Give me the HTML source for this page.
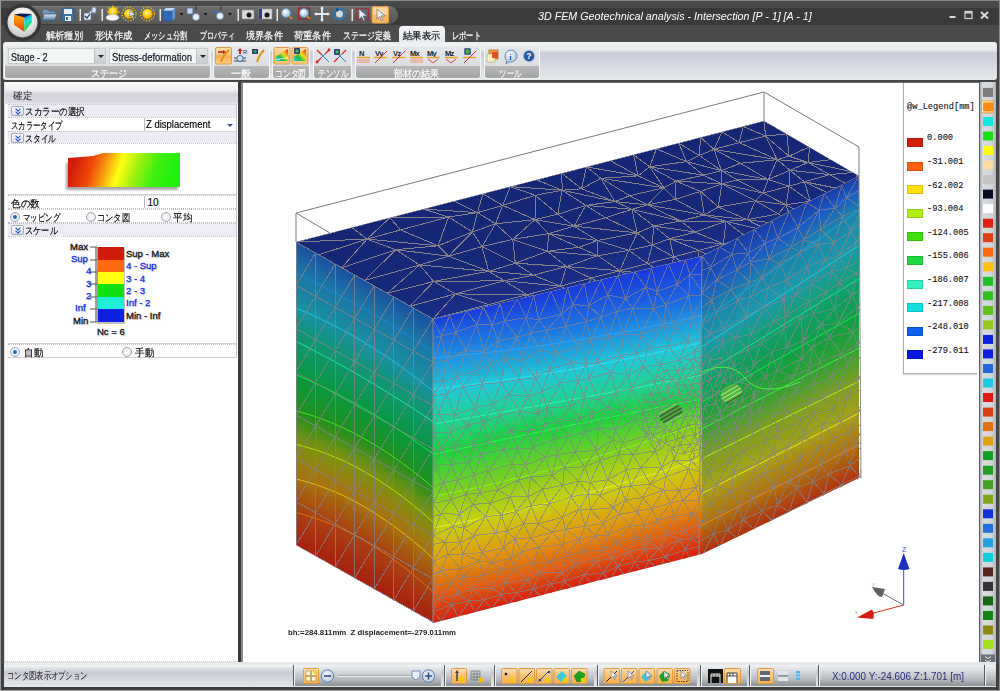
<!DOCTYPE html>
<html><head><meta charset="utf-8">
<style>
*{margin:0;padding:0;box-sizing:border-box}
html,body{width:1000px;height:691px;overflow:hidden;background:#454545;font-family:"Liberation Sans",sans-serif}
.a{position:absolute}
#title{left:0;top:0;width:1000px;height:43px;background:linear-gradient(#8a8a8a 0,#8a8a8a 1px,#4a4a4a 1px,#4a4a4a 8px,#3a3a3a 8px,#3a3a3a 25px,#4b4b4b 25px,#4b4b4b 43px)}
#appbtn{left:6px;top:6px;width:32px;height:32px;border-radius:50%;background:radial-gradient(circle at 50% 35%,#ffffff 0,#e8e8e8 45%,#9a9a9a 100%);box-shadow:0 0 0 2px #2e2e2e}
#qat{left:30px;top:6px;width:368px;height:19px;border-radius:0 10px 10px 0;background:linear-gradient(#6c6c6c,#606060 50%,#585858);border-top:1px solid #7a7a7a;border-bottom:1px solid #3e3e3e}
.ttl{left:538px;top:10px;color:#fff;font-style:italic;font-size:11.5px;white-space:nowrap;transform:scaleX(0.932);transform-origin:0 50%}
.wc{top:6px;color:#fff;font-size:12px;font-weight:bold}
.tab{top:29px;color:#fff;font-size:10px;white-space:nowrap;transform-origin:0 50%;-webkit-text-stroke:0.2px currentColor}
#acttab{left:399px;top:26px;width:46px;height:18px;border-radius:4px 4px 0 0;background:linear-gradient(#f4f6f8,#e2e6ea);}
#ribbon{left:3px;top:42px;width:994px;height:38px;background:linear-gradient(#eef2f2 0,#e6eaec 8px,#c9cbd9 11px,#dde1e4 30px,#e4eaea 38px);border-radius:3px}
.grp{top:45px;height:34px;border-radius:3px;border:1px solid #f4f6f6;background:linear-gradient(#e6e9ec,#d4d8dc)}
.glab{left:0;right:0;bottom:0;height:12px;background:linear-gradient(#b8b8b8,#a4a4a4);color:#f8f8f8;font-size:10px;text-align:center;line-height:12px;border-radius:0 0 3px 3px}
.combo{top:48px;height:16px;background:#f4f6f6;border:1px solid #c8cccc;font-size:11px;color:#1a1a2a;line-height:14px;padding-left:0}
.ct{position:absolute;left:2px;top:0.5px;white-space:nowrap;transform-origin:0 50%;-webkit-text-stroke:0.25px #1a1a2a}
.cbtn{position:absolute;right:0;top:0;width:11px;height:14px;background:linear-gradient(#e4e6e8,#c8cccf);border-left:1px solid #c0c4c4}
.cbtn:after{content:"";position:absolute;left:3px;top:6px;border-left:3px solid transparent;border-right:3px solid transparent;border-top:3px solid #222}
.ico{position:absolute;width:17px;height:17px}
.act{background:linear-gradient(#fbd8a0,#f6a84a);border:1px solid #d6902e;border-radius:2px}
#lp{left:4px;top:82px;width:234px;height:580px;background:#fff;border-bottom:1px dotted #c0c0c8;border-left:1px solid #e0e0e0}
#sep{left:238px;top:82px;width:3px;height:583px;background:#3a3a3a}
#vp{left:241px;top:82px;width:739px;height:583px;background:#fff;border-left:2px solid #8a8a8a;border-top:1px solid #6a6a6a}
#pal{left:980px;top:82px;width:16px;height:580px;background:linear-gradient(90deg,#b8bcc4,#d4d8dc 40%,#c4c8cc)}
#status{left:0;top:661px;width:1000px;height:30px;background:#454545}
.row{position:absolute;left:0;width:230px;font-size:10px;color:#111;white-space:nowrap}
.sec{background:#ebebf3;border-top:1px dotted #c8c8d0;}
.chev{position:absolute;left:5px;top:1px;width:12px;height:10px;border:1px solid #9aa0b0;border-radius:2px;background:linear-gradient(#fff,#dde)}
.panel{background:#fff}
.sec{position:absolute;left:0;width:228px;background:#ececf4;border-top:1px dotted #c4c4cc;font-size:10px;color:#000;-webkit-text-stroke:0.15px #000}
.rw{position:absolute;left:0;width:228px;background:#fff;border-top:1px dotted #c4c4cc;font-size:10px;color:#000;-webkit-text-stroke:0.15px #000}
.st{position:absolute;left:19px;top:0px;white-space:nowrap;transform-origin:0 50%}
.lt{position:absolute;top:1px;white-space:nowrap;transform-origin:0 50%}
.vsep{position:absolute;top:0;bottom:0;width:1px;background:#b8b8b8}
.tri{position:absolute;width:0;height:0;border-left:3px solid transparent;border-right:3px solid transparent;border-top:3px solid #3a5a8a}
.rad{position:absolute;width:10px;height:10px;border-radius:50%;border:1px solid #a0a4b0;background:radial-gradient(#fff,#e4e4ec)}
.rad.on:after{content:"";position:absolute;left:2px;top:2px;width:4px;height:4px;border-radius:50%;background:#1a6ac0}
.chev{position:absolute;left:3px;top:1px;width:13px;height:10px;border:1px solid #a4a8b8;border-radius:2px;background:linear-gradient(#fff,#e0e0ea)}
.chev:before,.chev:after{content:"";position:absolute;left:4px;width:3px;height:3px;border-right:1.5px solid #1a50d0;border-bottom:1.5px solid #1a50d0;transform:rotate(45deg)}
.chev:before{top:-0.5px}.chev:after{top:2.5px}
.sl{font-size:9.5px;white-space:nowrap;text-shadow:1px 1px 1px rgba(0,0,0,0.25);-webkit-text-stroke:0.3px currentColor}

.rl{top:67px;font-size:10px;color:#fafafa;white-space:nowrap;transform-origin:0 50%;text-shadow:0 0 1px #777;-webkit-text-stroke:0.3px #fff}
.sg{top:665px;height:21px;background:linear-gradient(#f0f2f4 0,#d8dce0 6px,#b8bcc0 14px,#8c9094 21px);border-left:1px solid #5a5a5a;box-shadow:inset 1px 0 0 #f4f4f4}
.lg{font-family:"Liberation Mono",monospace;font-size:8.7px;color:#111;white-space:nowrap;-webkit-text-stroke:0.1px #111}
</style></head><body>
<div id="title" class="a"></div>
<div id="qat" class="a"></div>
<svg class="a" style="left:0;top:0" width="400" height="27" viewBox="0 0 400 27">
<defs>
<linearGradient id="qb" x1="0" y1="0" x2="0" y2="1"><stop offset="0" stop-color="#dfe8f0"/><stop offset="1" stop-color="#5a86b0"/></linearGradient>
<radialGradient id="sun" cx="0.45" cy="0.4" r="0.6"><stop offset="0" stop-color="#fff8a0"/><stop offset="0.6" stop-color="#ffc800"/><stop offset="1" stop-color="#e08000"/></radialGradient>
<radialGradient id="lens" cx="0.4" cy="0.35" r="0.7"><stop offset="0" stop-color="#ffffff"/><stop offset="1" stop-color="#8ab8d8"/></radialGradient>
</defs>
<!-- folder -->
<path d="M43 10h5l1 1.5h6v2h-9l-3 6z" fill="#6a9cc8"/><path d="M44 14h13l-2.5 6h-12z" fill="url(#qb)" stroke="#3a6a98" stroke-width="0.8"/>
<!-- save -->
<rect x="62" y="8" width="12" height="13" rx="1" fill="#3a72b0" stroke="#234f80" stroke-width="0.6"/><rect x="64" y="9" width="8" height="5" fill="#e8eef4"/><rect x="65" y="16" width="6" height="5" fill="#f4f4f4"/><rect x="66" y="17" width="2" height="3" fill="#3a72b0"/>
<rect x="79.5" y="9" width="1.5" height="12" fill="#e8e8e8"/>
<!-- check arrow -->
<rect x="84" y="13" width="7" height="7" fill="#e8eef8" stroke="#5a78a0" stroke-width="0.7"/><path d="M85 16l2 2 3-4" stroke="#203050" stroke-width="1.2" fill="none"/><path d="M90 13l4-4" stroke="#b0c8e8" stroke-width="2"/><rect x="92" y="7" width="4" height="6" rx="2" fill="#d8e4f4" stroke="#6a8ab8" stroke-width="0.7"/>
<rect x="101.5" y="9" width="1.5" height="12" fill="#e8e8e8"/>
<!-- cloud sun -->
<circle cx="113" cy="12" r="5" fill="url(#sun)"/><g stroke="#ffd000" stroke-width="1.2"><path d="M113 5.5v1.5M107 12h1.5M118 12h1.5M108.5 7.5l1 1M117.5 7.5l-1 1"/></g><ellipse cx="112.5" cy="17.5" rx="6.5" ry="3.2" fill="#f4f4f4" stroke="#a0a0a0" stroke-width="0.5"/>
<!-- sun cursor -->
<circle cx="129" cy="14" r="5" fill="url(#sun)"/><g stroke="#ffd000" stroke-width="1.2" stroke-dasharray="1.2 1.6"><circle cx="129" cy="14" r="7" fill="none"/></g><path d="M130 10l5 5h-2.5l1.5 3.5-1.3.5-1.5-3.5-1.7 1.7z" fill="#dde6f0" stroke="#4a5a70" stroke-width="0.5"/>
<!-- sun -->
<circle cx="147.5" cy="14" r="5.2" fill="url(#sun)"/><g stroke="#ffd000" stroke-width="1.2" stroke-dasharray="1.2 1.6"><circle cx="147.5" cy="14" r="7" fill="none"/></g>
<rect x="159.5" y="9" width="1.5" height="12" fill="#e8e8e8"/>
<!-- cube -->
<path d="M163 11l3-3h9v10l-3 3h-9z" fill="#2a62b0"/><path d="M163 11l3-3h9l-3 3z" fill="#c8dcf0"/><path d="M172 11l3-3v10l-3 3z" fill="#6a9ad0"/><rect x="163" y="11" width="9" height="10" fill="#2e6ab8" stroke="#1a4a90" stroke-width="0.5"/>
<path d="M179.5 13h4l-2 2.5z" fill="#111"/>
<!-- icon 3 -->
<rect x="187" y="8" width="6" height="6" fill="#c8d8f0" stroke="#4a6aa0" stroke-width="0.8"/><circle cx="196" cy="17" r="3.5" fill="#e8f0f8" stroke="#6a8ab8" stroke-width="0.8"/><path d="M196 6v4" stroke="#222" stroke-width="0.8"/>
<path d="M203.5 13h4l-2 2.5z" fill="#111"/>
<path d="M212 12h6" stroke="#3a70c0" stroke-width="1.5"/><circle cx="220" cy="16" r="3.5" fill="#e8f0f8" stroke="#6a8ab8" stroke-width="0.8"/><path d="M221 6v4" stroke="#222" stroke-width="0.8"/>
<path d="M228 13h4l-2 2.5z" fill="#111"/>
<rect x="237.5" y="9" width="1.5" height="12" fill="#e8e8e8"/>
<!-- camera -->
<rect x="242" y="10" width="12" height="9" rx="1" fill="#d8d8d8" stroke="#909090" stroke-width="0.5"/><circle cx="249" cy="15" r="2.5" fill="#181818"/>
<rect x="259" y="9" width="13" height="10" fill="#d8d8d8" stroke="#909090" stroke-width="0.5"/><rect x="259" y="9" width="3" height="10" fill="#2a3aa0"/><circle cx="267" cy="15" r="2.5" fill="#181818"/>
<rect x="276.5" y="9" width="1.5" height="12" fill="#e8e8e8"/>
<!-- magnifiers -->
<circle cx="286" cy="13" r="4.5" fill="url(#lens)" stroke="#5a8ab8" stroke-width="1"/><path d="M289 16l3 3" stroke="#e09010" stroke-width="1.6"/>
<rect x="298.5" y="8" width="11" height="11" fill="none" stroke="#a02020" stroke-width="1.2"/><circle cx="304" cy="13" r="4.5" fill="url(#lens)" stroke="#5a8ab8" stroke-width="1"/><path d="M307 16l3 3" stroke="#e09010" stroke-width="1.6"/>
<!-- move -->
<path d="M322 7v14M315 14h14" stroke="#e0e8f0" stroke-width="2"/><path d="M322 6l-2 2.5h4zM322 22l-2-2.5h4zM314 14l2.5-2v4zM330 14l-2.5-2v4z" fill="#e0e8f0"/>
<!-- rotate -->
<circle cx="339.5" cy="14" r="5.5" fill="none" stroke="#2a7ac0" stroke-width="2"/><circle cx="339.5" cy="14" r="3.5" fill="#d8d8d8"/><path d="M336 8l3 1.5-2 2.5z" fill="#1a3a80"/>
<rect x="351.5" y="9" width="1.5" height="12" fill="#e8e8e8"/>
<!-- select box -->
<rect x="356.5" y="8.5" width="12" height="11" fill="none" stroke="#a02828" stroke-width="1.2" stroke-dasharray="3 1"/><path d="M359 9l8 7h-4l2 4-1.5.7-2-4-2.5 2.5z" fill="#e8eef8" stroke="#4a5a78" stroke-width="0.6"/>
<!-- active cursor -->
<rect x="372" y="6.5" width="16.5" height="16.5" rx="1.5" fill="#f8b860" stroke="#e8a040" stroke-width="1"/><rect x="373" y="7.5" width="14.5" height="7" fill="#fcd8a0"/><path d="M377 9l8 7h-4l2 4-1.5.7-2-4-2.5 2.5z" fill="#e8eef8" stroke="#4a5a78" stroke-width="0.6"/>
</svg>

<svg class="a" style="left:0;top:0" width="45" height="45" viewBox="0 0 45 45"><defs><radialGradient id="apg" cx="0.5" cy="0.3" r="0.75"><stop offset="0" stop-color="#ffffff"/><stop offset="0.6" stop-color="#e4e4e4"/><stop offset="1" stop-color="#b8b8b8"/></radialGradient><linearGradient id="apo" x1="0" y1="0" x2="0" y2="1"><stop offset="0" stop-color="#ffb000"/><stop offset="1" stop-color="#e84000"/></linearGradient><linearGradient id="apr" x1="0" y1="0" x2="0.3" y2="1"><stop offset="0" stop-color="#2050e0"/><stop offset="0.45" stop-color="#10e0e0"/><stop offset="1" stop-color="#20e010"/></linearGradient></defs>
<circle cx="22.5" cy="22.5" r="18.5" fill="#363636"/><circle cx="22.5" cy="22.5" r="15" fill="url(#apg)"/>
<path d="M14 14.6L24.4 17.6V31.9L14 24.7Z" fill="url(#apo)"/><path d="M24.4 17.6L31.9 14V22.1L24.4 31.9Z" fill="url(#apr)"/><path d="M14 14.6L20 13.6L31.9 14L24.4 17.6Z" fill="#101850"/></svg>
<div class="a ttl">3D FEM Geotechnical analysis - Intersection [P - 1] [A - 1]</div>
<svg class="a" style="left:945px;top:8px" width="50" height="14" viewBox="945 8 50 14"><path d="M949.5 17h6" stroke="#d8d8d8" stroke-width="2"/><rect x="965" y="11.5" width="7" height="7" fill="none" stroke="#d8d8d8" stroke-width="1.2"/><rect x="965" y="11" width="7" height="2.5" fill="#d8d8d8"/><path d="M981 12l7 6.5M988 12l-7 6.5" stroke="#e0e0e0" stroke-width="1.8"/></svg>
<div id="acttab" class="a"></div>
<div class="a tab" style="left:46px;transform:scaleX(0.918)">解析種別</div>
<div class="a tab" style="left:94.6px;transform:scaleX(0.934)">形状作成</div>
<div class="a tab" style="left:144px;transform:scaleX(0.721)">メッシュ分割</div>
<div class="a tab" style="left:199.5px;transform:scaleX(0.69)">プロパティ</div>
<div class="a tab" style="left:245.7px;transform:scaleX(0.918)">境界条件</div>
<div class="a tab" style="left:294px;transform:scaleX(0.92)">荷重条件</div>
<div class="a tab" style="left:343px;transform:scaleX(0.793)">ステージ定義</div>
<div class="a tab" style="left:402.8px;transform:scaleX(0.93);color:#111">結果表示</div>
<div class="a tab" style="left:452px;transform:scaleX(0.72)">レポート</div>
<div id="ribbon" class="a"></div>
<div class="a grp" style="left:4px;width:207px"><div class="a glab"></div></div>
<div class="a combo" style="left:8px;width:98px"><span class="ct" style="transform:scaleX(0.82)">Stage - 2</span><div class="cbtn"></div></div>
<div class="a combo" style="left:109px;width:99px"><span class="ct" style="transform:scaleX(0.86)">Stress-deformation</span><div class="cbtn"></div></div>
<div class="a grp" style="left:213px;width:57px"><div class="a glab"></div></div>
<div class="a grp" style="left:272px;width:38px"><div class="a glab"></div></div>
<div class="a grp" style="left:313px;width:39px"><div class="a glab"></div></div>
<div class="a grp" style="left:355px;width:126px"><div class="a glab"></div></div>
<div class="a grp" style="left:484px;width:56px"><div class="a glab"></div></div>
<div class="a rl" style="left:91px;transform:scaleX(0.9)">ステージ</div>
<div class="a rl" style="left:231px">一般</div>
<div class="a rl" style="left:275px;transform:scaleX(0.78)">コンタ図</div>
<div class="a rl" style="left:317.6px;transform:scaleX(0.75)">テンソル</div>
<div class="a rl" style="left:394.4px;transform:scaleX(0.9)">部材の結果</div>
<div class="a rl" style="left:499px;transform:scaleX(0.75)">ツール</div>
<svg class="a" style="left:0;top:0" width="560" height="80" viewBox="0 0 560 80">
<defs>
<linearGradient id="actg" x1="0" y1="0" x2="0" y2="1"><stop offset="0" stop-color="#fde0b0"/><stop offset="0.45" stop-color="#fbc47a"/><stop offset="0.5" stop-color="#f8aa48"/><stop offset="1" stop-color="#fcd090"/></linearGradient>
<linearGradient id="rbw" x1="0" y1="1" x2="1" y2="0"><stop offset="0" stop-color="#10d0e0"/><stop offset="0.35" stop-color="#20c040"/><stop offset="0.6" stop-color="#f0e020"/><stop offset="1" stop-color="#e02010"/></linearGradient>
<radialGradient id="bub" cx="0.4" cy="0.35" r="0.7"><stop offset="0" stop-color="#ffffff"/><stop offset="1" stop-color="#9ab8d8"/></radialGradient>
</defs>
<!-- 一般 -->
<rect x="215.5" y="47.5" width="16" height="16.5" rx="1.5" fill="url(#actg)" stroke="#e49a40"/>
<path d="M218 52h5" stroke="#c01818" stroke-width="1.5"/><path d="M223 50l3 2-3 2z" fill="#c01818"/><path d="M221 62q2-7 8-12" stroke="#e89010" stroke-width="2" fill="none"/>
<path d="M240 49v5" stroke="#d02020" stroke-width="2"/><path d="M237.5 51l2.5-3 2.5 3z" fill="#d02020"/><path d="M234 58h12M234 61h12" stroke="#404040" stroke-width="1.2"/><circle cx="240" cy="58.5" r="3" fill="#d8e8f8" stroke="#2a6ab0"/><text x="243" y="54" font-size="6" fill="#333" font-family="Liberation Sans">R</text>
<rect x="252" y="49" width="6" height="5" fill="#2a3a7a"/><rect x="253.5" y="50.5" width="3" height="2" fill="#30c030"/><path d="M257 62q2-7 7-12" stroke="#e89010" stroke-width="2" fill="none"/>
<!-- コンタ図 -->
<rect x="274" y="47.5" width="16" height="16.5" rx="1.5" fill="url(#actg)" stroke="#e49a40"/><path d="M276 61v-4q6-5 12-8v12z" fill="url(#rbw)"/><path d="M276 60q5-2 12-2" stroke="#fff" stroke-width="0.8" fill="none"/>
<rect x="292" y="47.5" width="16" height="16.5" rx="1.5" fill="url(#actg)" stroke="#e49a40"/><path d="M294 61v-4q6-5 12-8v12z" fill="url(#rbw)"/><rect x="294" y="48" width="6" height="6" rx="1" fill="#2a3a7a"/><rect x="295.5" y="49.5" width="3" height="3" fill="#40c040"/>
<!-- テンソル -->
<path d="M317 50l12 12M329 50l-12 12" stroke="#3a80d0" stroke-width="1"/><path d="M317 50l5 5M329 50l-4 4M317 62l4-4" stroke="#e02020" stroke-width="1.2"/><circle cx="317" cy="62" r="1.4" fill="#e02020"/><circle cx="329" cy="50" r="1.4" fill="#e02020"/>
<path d="M334 50l12 12M346 50l-12 12" stroke="#3a80d0" stroke-width="1"/><path d="M346 50l-4 4M334 62l4-4" stroke="#e02020" stroke-width="1.2"/><rect x="334" y="49" width="6" height="6" rx="1" fill="#2a3a7a"/><rect x="335.5" y="50.5" width="3" height="3" fill="#40c040"/>
<!-- 部材の結果 -->
<g font-family="Liberation Sans" font-size="7.5" fill="#222" font-weight="bold">
<text x="359" y="56">N</text><text x="375" y="56" letter-spacing="-0.5">Vy</text><text x="393" y="56" letter-spacing="-0.5">Vz</text><text x="410" y="56" letter-spacing="-0.8">Mx</text><text x="427" y="56" letter-spacing="-0.8">My</text><text x="445" y="56" letter-spacing="-0.8">Mz</text>
</g>
<g stroke="#f0a020" stroke-width="1.6"><path d="M357 57.5h13M374 57.5h13M392 57.5h13M410 57.5h13M427 57.5h13M445 57.5h13M463 57.5h13"/></g>
<g stroke="#f09080" stroke-width="1"><path d="M357 60h13M357 62h13M410 60h13M410 62h13"/></g>
<path d="M375 63l12-12M393 63l12-12M464 63l12-12" stroke="#d02040" stroke-width="1"/>
<path d="M428 59l5 4 5-4M446 59l5 4 5-4" stroke="#e04040" stroke-width="1" fill="none"/>
<rect x="464" y="48" width="7" height="7" rx="1" fill="#2a3a7a" stroke="#e0e0f0" stroke-width="0.6"/><rect x="465.5" y="49.5" width="4" height="4" fill="#40c040"/>
<!-- ツール -->
<rect x="489" y="50" width="9" height="9" fill="#f0a030" stroke="#c06020" stroke-width="0.8"/><rect x="487" y="54" width="8" height="8" fill="#f8f0c0" stroke="#a0a080" stroke-width="0.6"/><rect x="492" y="52" width="6" height="6" fill="#e05020"/>
<path d="M505 56a6 6 0 1 1 4 5.6l-3 2.4.5-3.5a6 6 0 0 1-1.5-4.5z" fill="url(#bub)" stroke="#4a7ab0" stroke-width="0.8"/><text x="509.3" y="59.5" font-family="Liberation Serif" font-weight="bold" font-size="8" fill="#1a4a90">i</text>
<circle cx="529" cy="56" r="6" fill="#2a5aa8" stroke="#c8d8ec" stroke-width="1.2"/><text x="526.3" y="59.3" font-family="Liberation Sans" font-weight="bold" font-size="8.5" fill="#fff">?</text>
</svg>

<div id="lp" class="a">
<div class="a" style="left:0;top:0;width:234px;height:22px;background:linear-gradient(#fafafc 0,#f0f0f4 8px,#d4d4dc 12px,#dadae2 20px,#e6e6ee 22px)"></div>
<div class="a jp" style="left:8px;top:7px;font-size:10px;color:#222;transform:scaleX(0.95);transform-origin:0 50%">確定</div>
<div class="a panel" style="left:3px;top:22px;width:229px;height:254px;border-right:1px solid #c4c4cc">
 <div class="a sec" style="top:0;height:13px"><div class="chev"></div><span class="st" style="left:17px;transform:scaleX(0.857)">スカラーの選択</span></div>
 <div class="a rw" style="top:13px;height:14px"><span class="lt" style="left:2.6px;transform:scaleX(0.737)">スカラータイプ</span><div class="a vsep" style="left:136px"></div><span class="lt" style="left:138px;letter-spacing:0;transform:scaleX(0.95)">Z displacement</span><div class="a tri" style="left:219px;top:6px"></div></div>
 <div class="a sec" style="top:27px;height:12px"><div class="chev"></div><span class="st" style="left:17px;transform:scaleX(0.78)">スタイル</span></div>
 <div class="a rw" style="top:39px;height:52px;border-bottom:1px solid #d0d0d0"><svg class="a" style="left:47px;top:9px" width="130" height="40" viewBox="0 0 130 40"><defs><linearGradient id="sg" x1="0" y1="0" x2="1" y2="0.1"><stop offset="0.08" stop-color="#d01c08"/><stop offset="0.25" stop-color="#f04a08"/><stop offset="0.38" stop-color="#f8a010"/><stop offset="0.5" stop-color="#ffff10"/><stop offset="0.65" stop-color="#a0f010"/><stop offset="0.82" stop-color="#40f010"/><stop offset="1" stop-color="#20f010"/></linearGradient><filter id="sh" x="-10%" y="-10%" width="130%" height="140%"><feGaussianBlur stdDeviation="1.2"/></filter></defs><path d="M13 8 L38 5 L48 1 L125 1 L125 35 L13 35 Z" fill="#606060" opacity="0.55" transform="translate(-2,2)" filter="url(#sh)"/><path d="M13 5 L38 3 L48 0 L125 0 L125 34 L13 34 Z" fill="url(#sg)"/></svg></div>
 <div class="a rw" style="top:91px;height:14px;border-bottom:1px dotted #c0c0c8"><span class="lt" style="left:2.6px;transform:scaleX(0.96)">色の数</span><div class="a vsep" style="left:136px"></div><span class="lt" style="left:139.4px;letter-spacing:0">10</span></div>
 <div class="a rw" style="top:105px;height:14px;border-bottom:1px dotted #c0c0c8"><div class="a rad on" style="left:2px;top:2px"></div><span class="lt" style="left:14.6px;transform:scaleX(0.744)">マッピング</span><div class="a rad" style="left:78px;top:2px"></div><span class="lt" style="left:89px;transform:scaleX(0.823)">コンタ図</span><div class="a rad" style="left:153px;top:2px"></div><span class="lt" style="left:165.3px;transform:scaleX(0.95)">平均</span></div>
 <div class="a sec" style="top:119px;height:13px"><div class="chev"></div><span class="st" style="left:17px;transform:scaleX(0.823)">スケール</span></div>
 <div class="a rw" style="top:132px;height:108px;border-bottom:1px solid #d0d0d0"></div>
 <div class="a rw" style="top:240px;height:14px;border-bottom:1px solid #d0d0d0"><div class="a rad on" style="left:2px;top:2px"></div><span class="lt" style="left:15.8px;transform:scaleX(0.96)">自動</span><div class="a rad" style="left:114px;top:2px"></div><span class="lt" style="left:127.4px;transform:scaleX(0.96)">手動</span></div>
</div>
</div>
<div class="a" style="left:0;top:0;width:0;height:0">
<svg class="a" style="left:60px;top:242px" width="110" height="100" viewBox="0 0 110 100">
<g fill="#999" opacity="0.6"><rect x="37" y="6" width="28" height="76"/></g>
<rect x="35" y="5" width="3" height="75" fill="#a0a0a0"/>
<rect x="38" y="5" width="26" height="13" fill="#d01c08"/>
<rect x="38" y="18" width="26" height="12" fill="#ff6a10"/>
<rect x="38" y="30" width="26" height="12" fill="#ffff10"/>
<rect x="38" y="42" width="26" height="13" fill="#10e010"/>
<rect x="38" y="55" width="26" height="12" fill="#20f0d8"/>
<rect x="38" y="67" width="26" height="13" fill="#1020e0"/>
<path d="M30 5H37M30 18H37M30 30H37M30 42H37M30 55H37M30 67H37M30 80H37" stroke="#555" stroke-width="1"/>
</svg>
<div class="a sl" style="left:70px;top:241px;color:#111">Max</div>
<div class="a sl" style="left:71px;top:253px;color:#1430f0">Sup</div>
<div class="a sl" style="left:86px;top:265px;color:#1430f0">4</div>
<div class="a sl" style="left:86px;top:278px;color:#1430f0">3</div>
<div class="a sl" style="left:86px;top:290px;color:#1430f0">2</div>
<div class="a sl" style="left:75px;top:302px;color:#1430f0">Inf</div>
<div class="a sl" style="left:73px;top:315px;color:#111">Min</div>
<div class="a sl" style="left:126px;top:248px;color:#111">Sup - Max</div>
<div class="a sl" style="left:126px;top:260px;color:#1430f0">4 - Sup</div>
<div class="a sl" style="left:126px;top:273px;color:#1430f0">3 - 4</div>
<div class="a sl" style="left:126px;top:285px;color:#1430f0">2 - 3</div>
<div class="a sl" style="left:126px;top:297px;color:#1430f0">Inf - 2</div>
<div class="a sl" style="left:126px;top:310px;color:#111">Min - Inf</div>
<div class="a sl" style="left:97px;top:326px;color:#111">Nc = 6</div>
</div>
<div id="sep" class="a"></div>
<div id="vp" class="a"></div>
<svg class="a" style="left:0;top:0" width="1000" height="691" viewBox="0 0 1000 691"><defs><linearGradient id="gL" gradientUnits="userSpaceOnUse" x1="296" y1="242" x2="166.6" y2="472.3"><stop offset="0" stop-color="#1a4ca8"/><stop offset="0.1" stop-color="#1a68b0"/><stop offset="0.2" stop-color="#1890b0"/><stop offset="0.3" stop-color="#10a090"/><stop offset="0.4" stop-color="#0a9858"/><stop offset="0.5" stop-color="#0a9430"/><stop offset="0.6" stop-color="#209020"/><stop offset="0.7" stop-color="#6a9818"/><stop offset="0.78" stop-color="#a09a10"/><stop offset="0.86" stop-color="#a87010"/><stop offset="0.93" stop-color="#a84010"/><stop offset="1" stop-color="#a02010"/></linearGradient><linearGradient id="gF" gradientUnits="userSpaceOnUse" x1="433" y1="319" x2="500.5" y2="607.2"><stop offset="0" stop-color="#1838e0"/><stop offset="0.1" stop-color="#1a70e0"/><stop offset="0.2" stop-color="#20b0e0"/><stop offset="0.3" stop-color="#20d0d0"/><stop offset="0.4" stop-color="#20d088"/><stop offset="0.5" stop-color="#14c840"/><stop offset="0.6" stop-color="#34d020"/><stop offset="0.7" stop-color="#a0d020"/><stop offset="0.8" stop-color="#e0d010"/><stop offset="0.9" stop-color="#e07010"/><stop offset="1" stop-color="#e02010"/></linearGradient><linearGradient id="gR" gradientUnits="userSpaceOnUse" x1="702" y1="256" x2="823.4" y2="494.2"><stop offset="0" stop-color="#1a58c8"/><stop offset="0.1" stop-color="#2090b0"/><stop offset="0.25" stop-color="#18a090"/><stop offset="0.38" stop-color="#109848"/><stop offset="0.5" stop-color="#189a30"/><stop offset="0.6" stop-color="#50a020"/><stop offset="0.7" stop-color="#a0a020"/><stop offset="0.82" stop-color="#b87010"/><stop offset="0.92" stop-color="#c04010"/><stop offset="1" stop-color="#c02010"/></linearGradient><linearGradient id="gT" gradientUnits="userSpaceOnUse" x1="296" y1="242" x2="323.2" y2="347.4"><stop offset="0" stop-color="#142676"/><stop offset="0.7" stop-color="#15287a"/><stop offset="1" stop-color="#1a2e8a"/></linearGradient><clipPath id="cT"><polygon points="296,242 764,121 859,176 702,256 433,319"/></clipPath><clipPath id="cL"><polygon points="296,242 433,319 433,623 296,545"/></clipPath><clipPath id="cF"><path d="M433,319 L702,256 L699,555 L433,623 Z"/></clipPath><clipPath id="cR"><path d="M702,256 L859,176 L861,478 L699,555 Z"/></clipPath><linearGradient id="fl0" gradientUnits="userSpaceOnUse" x1="305.8" y1="247.5" x2="176.4" y2="477.8"><stop offset="0.000" stop-color="#1a50a0"/><stop offset="0.100" stop-color="#1a78a8"/><stop offset="0.213" stop-color="#1a90a0"/><stop offset="0.326" stop-color="#10986a"/><stop offset="0.434" stop-color="#0a9840"/><stop offset="0.548" stop-color="#209020"/><stop offset="0.658" stop-color="#809010"/><stop offset="0.772" stop-color="#a87010"/><stop offset="0.883" stop-color="#a84010"/><stop offset="1.000" stop-color="#a82010"/></linearGradient><linearGradient id="fl1" gradientUnits="userSpaceOnUse" x1="325.4" y1="258.5" x2="195.9" y2="488.8"><stop offset="0.000" stop-color="#1a50a0"/><stop offset="0.096" stop-color="#1a78a8"/><stop offset="0.207" stop-color="#1a90a0"/><stop offset="0.324" stop-color="#10986a"/><stop offset="0.427" stop-color="#0a9840"/><stop offset="0.534" stop-color="#209020"/><stop offset="0.643" stop-color="#809010"/><stop offset="0.757" stop-color="#a87010"/><stop offset="0.869" stop-color="#a84010"/><stop offset="1.000" stop-color="#a82010"/></linearGradient><linearGradient id="fl2" gradientUnits="userSpaceOnUse" x1="344.9" y1="269.5" x2="215.5" y2="499.8"><stop offset="0.000" stop-color="#1a50a0"/><stop offset="0.094" stop-color="#1a78a8"/><stop offset="0.204" stop-color="#1a90a0"/><stop offset="0.323" stop-color="#10986a"/><stop offset="0.424" stop-color="#0a9840"/><stop offset="0.525" stop-color="#209020"/><stop offset="0.634" stop-color="#809010"/><stop offset="0.749" stop-color="#a87010"/><stop offset="0.861" stop-color="#a84010"/><stop offset="1.000" stop-color="#a82010"/></linearGradient><linearGradient id="fl3" gradientUnits="userSpaceOnUse" x1="364.5" y1="280.5" x2="235.1" y2="510.8"><stop offset="0.000" stop-color="#1a50a0"/><stop offset="0.094" stop-color="#1a78a8"/><stop offset="0.205" stop-color="#1a90a0"/><stop offset="0.324" stop-color="#10986a"/><stop offset="0.423" stop-color="#0a9840"/><stop offset="0.522" stop-color="#209020"/><stop offset="0.631" stop-color="#809010"/><stop offset="0.747" stop-color="#a87010"/><stop offset="0.859" stop-color="#a84010"/><stop offset="1.000" stop-color="#a82010"/></linearGradient><linearGradient id="fl4" gradientUnits="userSpaceOnUse" x1="384.1" y1="291.5" x2="254.7" y2="521.8"><stop offset="0.000" stop-color="#1a50a0"/><stop offset="0.096" stop-color="#1a78a8"/><stop offset="0.210" stop-color="#1a90a0"/><stop offset="0.326" stop-color="#10986a"/><stop offset="0.426" stop-color="#0a9840"/><stop offset="0.525" stop-color="#209020"/><stop offset="0.634" stop-color="#809010"/><stop offset="0.751" stop-color="#a87010"/><stop offset="0.863" stop-color="#a84010"/><stop offset="1.000" stop-color="#a82010"/></linearGradient><linearGradient id="fl5" gradientUnits="userSpaceOnUse" x1="403.6" y1="302.5" x2="274.2" y2="532.8"><stop offset="0.000" stop-color="#1a50a0"/><stop offset="0.100" stop-color="#1a78a8"/><stop offset="0.218" stop-color="#1a90a0"/><stop offset="0.330" stop-color="#10986a"/><stop offset="0.431" stop-color="#0a9840"/><stop offset="0.533" stop-color="#209020"/><stop offset="0.644" stop-color="#809010"/><stop offset="0.762" stop-color="#a87010"/><stop offset="0.873" stop-color="#a84010"/><stop offset="1.000" stop-color="#a82010"/></linearGradient><linearGradient id="fl6" gradientUnits="userSpaceOnUse" x1="423.2" y1="313.5" x2="293.8" y2="543.8"><stop offset="0.000" stop-color="#1a50a0"/><stop offset="0.105" stop-color="#1a78a8"/><stop offset="0.230" stop-color="#1a90a0"/><stop offset="0.336" stop-color="#10986a"/><stop offset="0.440" stop-color="#0a9840"/><stop offset="0.547" stop-color="#209020"/><stop offset="0.660" stop-color="#809010"/><stop offset="0.779" stop-color="#a87010"/><stop offset="0.889" stop-color="#a84010"/><stop offset="1.000" stop-color="#a82010"/></linearGradient><linearGradient id="ff0" gradientUnits="userSpaceOnUse" x1="441.4" y1="317" x2="508.9" y2="605"><stop offset="0.000" stop-color="#1a38dc"/><stop offset="0.044" stop-color="#1a60e0"/><stop offset="0.132" stop-color="#2090e0"/><stop offset="0.235" stop-color="#20c8d8"/><stop offset="0.348" stop-color="#20d090"/><stop offset="0.447" stop-color="#20d040"/><stop offset="0.585" stop-color="#80d020"/><stop offset="0.689" stop-color="#c8d010"/><stop offset="0.799" stop-color="#e0a010"/><stop offset="0.902" stop-color="#e06010"/><stop offset="1.000" stop-color="#d82010"/></linearGradient><linearGradient id="ff1" gradientUnits="userSpaceOnUse" x1="458.2" y1="313.1" x2="525.6" y2="600.8"><stop offset="0.000" stop-color="#1a38dc"/><stop offset="0.051" stop-color="#1a60e0"/><stop offset="0.140" stop-color="#2090e0"/><stop offset="0.241" stop-color="#20c8d8"/><stop offset="0.352" stop-color="#20d090"/><stop offset="0.448" stop-color="#20d040"/><stop offset="0.588" stop-color="#80d020"/><stop offset="0.692" stop-color="#c8d010"/><stop offset="0.802" stop-color="#e0a010"/><stop offset="0.907" stop-color="#e06010"/><stop offset="1.000" stop-color="#d82010"/></linearGradient><linearGradient id="ff2" gradientUnits="userSpaceOnUse" x1="475" y1="309.2" x2="542.3" y2="596.5"><stop offset="0.000" stop-color="#1a38dc"/><stop offset="0.058" stop-color="#1a60e0"/><stop offset="0.148" stop-color="#2090e0"/><stop offset="0.248" stop-color="#20c8d8"/><stop offset="0.355" stop-color="#20d090"/><stop offset="0.450" stop-color="#20d040"/><stop offset="0.590" stop-color="#80d020"/><stop offset="0.695" stop-color="#c8d010"/><stop offset="0.804" stop-color="#e0a010"/><stop offset="0.911" stop-color="#e06010"/><stop offset="1.000" stop-color="#d82010"/></linearGradient><linearGradient id="ff3" gradientUnits="userSpaceOnUse" x1="491.8" y1="305.2" x2="559" y2="592.2"><stop offset="0.000" stop-color="#1a38dc"/><stop offset="0.064" stop-color="#1a60e0"/><stop offset="0.155" stop-color="#2090e0"/><stop offset="0.253" stop-color="#20c8d8"/><stop offset="0.359" stop-color="#20d090"/><stop offset="0.451" stop-color="#20d040"/><stop offset="0.591" stop-color="#80d020"/><stop offset="0.697" stop-color="#c8d010"/><stop offset="0.805" stop-color="#e0a010"/><stop offset="0.914" stop-color="#e06010"/><stop offset="1.000" stop-color="#d82010"/></linearGradient><linearGradient id="ff4" gradientUnits="userSpaceOnUse" x1="508.7" y1="301.3" x2="575.8" y2="587.9"><stop offset="0.000" stop-color="#1a38dc"/><stop offset="0.071" stop-color="#1a60e0"/><stop offset="0.161" stop-color="#2090e0"/><stop offset="0.259" stop-color="#20c8d8"/><stop offset="0.363" stop-color="#20d090"/><stop offset="0.453" stop-color="#20d040"/><stop offset="0.592" stop-color="#80d020"/><stop offset="0.699" stop-color="#c8d010"/><stop offset="0.807" stop-color="#e0a010"/><stop offset="0.916" stop-color="#e06010"/><stop offset="1.000" stop-color="#d82010"/></linearGradient><linearGradient id="ff5" gradientUnits="userSpaceOnUse" x1="525.5" y1="297.3" x2="592.5" y2="583.6"><stop offset="0.000" stop-color="#1a38dc"/><stop offset="0.077" stop-color="#1a60e0"/><stop offset="0.167" stop-color="#2090e0"/><stop offset="0.264" stop-color="#20c8d8"/><stop offset="0.366" stop-color="#20d090"/><stop offset="0.455" stop-color="#20d040"/><stop offset="0.592" stop-color="#80d020"/><stop offset="0.700" stop-color="#c8d010"/><stop offset="0.808" stop-color="#e0a010"/><stop offset="0.918" stop-color="#e06010"/><stop offset="1.000" stop-color="#d82010"/></linearGradient><linearGradient id="ff6" gradientUnits="userSpaceOnUse" x1="542.3" y1="293.4" x2="609.2" y2="579.3"><stop offset="0.000" stop-color="#1a38dc"/><stop offset="0.082" stop-color="#1a60e0"/><stop offset="0.173" stop-color="#2090e0"/><stop offset="0.268" stop-color="#20c8d8"/><stop offset="0.370" stop-color="#20d090"/><stop offset="0.457" stop-color="#20d040"/><stop offset="0.592" stop-color="#80d020"/><stop offset="0.701" stop-color="#c8d010"/><stop offset="0.808" stop-color="#e0a010"/><stop offset="0.919" stop-color="#e06010"/><stop offset="1.000" stop-color="#d82010"/></linearGradient><linearGradient id="ff7" gradientUnits="userSpaceOnUse" x1="559.1" y1="289.5" x2="626" y2="575"><stop offset="0.000" stop-color="#1a38dc"/><stop offset="0.087" stop-color="#1a60e0"/><stop offset="0.178" stop-color="#2090e0"/><stop offset="0.273" stop-color="#20c8d8"/><stop offset="0.373" stop-color="#20d090"/><stop offset="0.459" stop-color="#20d040"/><stop offset="0.591" stop-color="#80d020"/><stop offset="0.701" stop-color="#c8d010"/><stop offset="0.809" stop-color="#e0a010"/><stop offset="0.920" stop-color="#e06010"/><stop offset="1.000" stop-color="#d82010"/></linearGradient><linearGradient id="ff8" gradientUnits="userSpaceOnUse" x1="575.9" y1="285.5" x2="642.7" y2="570.7"><stop offset="0.000" stop-color="#1a38dc"/><stop offset="0.092" stop-color="#1a60e0"/><stop offset="0.182" stop-color="#2090e0"/><stop offset="0.276" stop-color="#20c8d8"/><stop offset="0.377" stop-color="#20d090"/><stop offset="0.461" stop-color="#20d040"/><stop offset="0.589" stop-color="#80d020"/><stop offset="0.700" stop-color="#c8d010"/><stop offset="0.809" stop-color="#e0a010"/><stop offset="0.920" stop-color="#e06010"/><stop offset="1.000" stop-color="#d82010"/></linearGradient><linearGradient id="ff9" gradientUnits="userSpaceOnUse" x1="592.7" y1="281.6" x2="659.4" y2="566.4"><stop offset="0.000" stop-color="#1a38dc"/><stop offset="0.097" stop-color="#1a60e0"/><stop offset="0.186" stop-color="#2090e0"/><stop offset="0.280" stop-color="#20c8d8"/><stop offset="0.380" stop-color="#20d090"/><stop offset="0.463" stop-color="#20d040"/><stop offset="0.587" stop-color="#80d020"/><stop offset="0.699" stop-color="#c8d010"/><stop offset="0.809" stop-color="#e0a010"/><stop offset="0.919" stop-color="#e06010"/><stop offset="1.000" stop-color="#d82010"/></linearGradient><linearGradient id="ff10" gradientUnits="userSpaceOnUse" x1="609.5" y1="277.7" x2="676.2" y2="562.1"><stop offset="0.000" stop-color="#1a38dc"/><stop offset="0.102" stop-color="#1a60e0"/><stop offset="0.190" stop-color="#2090e0"/><stop offset="0.282" stop-color="#20c8d8"/><stop offset="0.383" stop-color="#20d090"/><stop offset="0.466" stop-color="#20d040"/><stop offset="0.584" stop-color="#80d020"/><stop offset="0.698" stop-color="#c8d010"/><stop offset="0.808" stop-color="#e0a010"/><stop offset="0.918" stop-color="#e06010"/><stop offset="1.000" stop-color="#d82010"/></linearGradient><linearGradient id="ff11" gradientUnits="userSpaceOnUse" x1="626.3" y1="273.7" x2="692.9" y2="557.8"><stop offset="0.000" stop-color="#1a38dc"/><stop offset="0.106" stop-color="#1a60e0"/><stop offset="0.193" stop-color="#2090e0"/><stop offset="0.285" stop-color="#20c8d8"/><stop offset="0.386" stop-color="#20d090"/><stop offset="0.468" stop-color="#20d040"/><stop offset="0.581" stop-color="#80d020"/><stop offset="0.696" stop-color="#c8d010"/><stop offset="0.808" stop-color="#e0a010"/><stop offset="0.916" stop-color="#e06010"/><stop offset="1.000" stop-color="#d82010"/></linearGradient><linearGradient id="ff12" gradientUnits="userSpaceOnUse" x1="643.2" y1="269.8" x2="709.6" y2="553.5"><stop offset="0.000" stop-color="#1a38dc"/><stop offset="0.109" stop-color="#1a60e0"/><stop offset="0.195" stop-color="#2090e0"/><stop offset="0.287" stop-color="#20c8d8"/><stop offset="0.390" stop-color="#20d090"/><stop offset="0.471" stop-color="#20d040"/><stop offset="0.578" stop-color="#80d020"/><stop offset="0.693" stop-color="#c8d010"/><stop offset="0.806" stop-color="#e0a010"/><stop offset="0.914" stop-color="#e06010"/><stop offset="1.000" stop-color="#d82010"/></linearGradient><linearGradient id="ff13" gradientUnits="userSpaceOnUse" x1="660" y1="265.8" x2="726.3" y2="549.2"><stop offset="0.000" stop-color="#1a38dc"/><stop offset="0.113" stop-color="#1a60e0"/><stop offset="0.197" stop-color="#2090e0"/><stop offset="0.288" stop-color="#20c8d8"/><stop offset="0.393" stop-color="#20d090"/><stop offset="0.473" stop-color="#20d040"/><stop offset="0.573" stop-color="#80d020"/><stop offset="0.690" stop-color="#c8d010"/><stop offset="0.805" stop-color="#e0a010"/><stop offset="0.911" stop-color="#e06010"/><stop offset="1.000" stop-color="#d82010"/></linearGradient><linearGradient id="ff14" gradientUnits="userSpaceOnUse" x1="676.8" y1="261.9" x2="743.1" y2="544.9"><stop offset="0.000" stop-color="#1a38dc"/><stop offset="0.116" stop-color="#1a60e0"/><stop offset="0.199" stop-color="#2090e0"/><stop offset="0.289" stop-color="#20c8d8"/><stop offset="0.396" stop-color="#20d090"/><stop offset="0.476" stop-color="#20d040"/><stop offset="0.568" stop-color="#80d020"/><stop offset="0.686" stop-color="#c8d010"/><stop offset="0.803" stop-color="#e0a010"/><stop offset="0.907" stop-color="#e06010"/><stop offset="1.000" stop-color="#d82010"/></linearGradient><linearGradient id="ff15" gradientUnits="userSpaceOnUse" x1="693.6" y1="258" x2="759.8" y2="540.7"><stop offset="0.000" stop-color="#1a38dc"/><stop offset="0.119" stop-color="#1a60e0"/><stop offset="0.200" stop-color="#2090e0"/><stop offset="0.290" stop-color="#20c8d8"/><stop offset="0.399" stop-color="#20d090"/><stop offset="0.479" stop-color="#20d040"/><stop offset="0.563" stop-color="#80d020"/><stop offset="0.682" stop-color="#c8d010"/><stop offset="0.801" stop-color="#e0a010"/><stop offset="0.902" stop-color="#e06010"/><stop offset="1.000" stop-color="#d82010"/></linearGradient><linearGradient id="fr0" gradientUnits="userSpaceOnUse" x1="710.7" y1="251.6" x2="831.4" y2="488.3"><stop offset="0.000" stop-color="#1a3aa8"/><stop offset="0.106" stop-color="#1a58c0"/><stop offset="0.211" stop-color="#1a88b0"/><stop offset="0.300" stop-color="#1a98a8"/><stop offset="0.395" stop-color="#10a070"/><stop offset="0.488" stop-color="#10a048"/><stop offset="0.579" stop-color="#30a030"/><stop offset="0.680" stop-color="#80a020"/><stop offset="0.795" stop-color="#a8a018"/><stop offset="0.902" stop-color="#b07010"/><stop offset="1.000" stop-color="#b03010"/></linearGradient><linearGradient id="fr1" gradientUnits="userSpaceOnUse" x1="728.2" y1="242.7" x2="849" y2="479.8"><stop offset="0.000" stop-color="#1a3aa8"/><stop offset="0.099" stop-color="#1a58c0"/><stop offset="0.200" stop-color="#1a88b0"/><stop offset="0.292" stop-color="#1a98a8"/><stop offset="0.388" stop-color="#10a070"/><stop offset="0.484" stop-color="#10a048"/><stop offset="0.578" stop-color="#30a030"/><stop offset="0.680" stop-color="#80a020"/><stop offset="0.794" stop-color="#a8a018"/><stop offset="0.901" stop-color="#b07010"/><stop offset="1.000" stop-color="#b03010"/></linearGradient><linearGradient id="fr2" gradientUnits="userSpaceOnUse" x1="745.6" y1="233.8" x2="866.6" y2="471.2"><stop offset="0.000" stop-color="#1a3aa8"/><stop offset="0.091" stop-color="#1a58c0"/><stop offset="0.189" stop-color="#1a88b0"/><stop offset="0.283" stop-color="#1a98a8"/><stop offset="0.382" stop-color="#10a070"/><stop offset="0.480" stop-color="#10a048"/><stop offset="0.577" stop-color="#30a030"/><stop offset="0.680" stop-color="#80a020"/><stop offset="0.793" stop-color="#a8a018"/><stop offset="0.899" stop-color="#b07010"/><stop offset="1.000" stop-color="#b03010"/></linearGradient><linearGradient id="fr3" gradientUnits="userSpaceOnUse" x1="763.1" y1="224.9" x2="884.2" y2="462.7"><stop offset="0.000" stop-color="#1a3aa8"/><stop offset="0.084" stop-color="#1a58c0"/><stop offset="0.177" stop-color="#1a88b0"/><stop offset="0.275" stop-color="#1a98a8"/><stop offset="0.375" stop-color="#10a070"/><stop offset="0.476" stop-color="#10a048"/><stop offset="0.576" stop-color="#30a030"/><stop offset="0.680" stop-color="#80a020"/><stop offset="0.792" stop-color="#a8a018"/><stop offset="0.898" stop-color="#b07010"/><stop offset="1.000" stop-color="#b03010"/></linearGradient><linearGradient id="fr4" gradientUnits="userSpaceOnUse" x1="780.5" y1="216" x2="901.9" y2="454.2"><stop offset="0.000" stop-color="#1a3aa8"/><stop offset="0.076" stop-color="#1a58c0"/><stop offset="0.166" stop-color="#1a88b0"/><stop offset="0.267" stop-color="#1a98a8"/><stop offset="0.369" stop-color="#10a070"/><stop offset="0.473" stop-color="#10a048"/><stop offset="0.575" stop-color="#30a030"/><stop offset="0.680" stop-color="#80a020"/><stop offset="0.790" stop-color="#a8a018"/><stop offset="0.897" stop-color="#b07010"/><stop offset="1.000" stop-color="#b03010"/></linearGradient><linearGradient id="fr5" gradientUnits="userSpaceOnUse" x1="797.9" y1="207.1" x2="919.5" y2="445.6"><stop offset="0.000" stop-color="#1a3aa8"/><stop offset="0.069" stop-color="#1a58c0"/><stop offset="0.155" stop-color="#1a88b0"/><stop offset="0.259" stop-color="#1a98a8"/><stop offset="0.363" stop-color="#10a070"/><stop offset="0.469" stop-color="#10a048"/><stop offset="0.574" stop-color="#30a030"/><stop offset="0.680" stop-color="#80a020"/><stop offset="0.789" stop-color="#a8a018"/><stop offset="0.895" stop-color="#b07010"/><stop offset="1.000" stop-color="#b03010"/></linearGradient><linearGradient id="fr6" gradientUnits="userSpaceOnUse" x1="815.4" y1="198.2" x2="937.1" y2="437.1"><stop offset="0.000" stop-color="#1a3aa8"/><stop offset="0.062" stop-color="#1a58c0"/><stop offset="0.143" stop-color="#1a88b0"/><stop offset="0.251" stop-color="#1a98a8"/><stop offset="0.356" stop-color="#10a070"/><stop offset="0.465" stop-color="#10a048"/><stop offset="0.573" stop-color="#30a030"/><stop offset="0.680" stop-color="#80a020"/><stop offset="0.788" stop-color="#a8a018"/><stop offset="0.894" stop-color="#b07010"/><stop offset="1.000" stop-color="#b03010"/></linearGradient><linearGradient id="fr7" gradientUnits="userSpaceOnUse" x1="832.8" y1="189.3" x2="954.7" y2="428.6"><stop offset="0.000" stop-color="#1a3aa8"/><stop offset="0.054" stop-color="#1a58c0"/><stop offset="0.132" stop-color="#1a88b0"/><stop offset="0.242" stop-color="#1a98a8"/><stop offset="0.350" stop-color="#10a070"/><stop offset="0.461" stop-color="#10a048"/><stop offset="0.572" stop-color="#30a030"/><stop offset="0.680" stop-color="#80a020"/><stop offset="0.787" stop-color="#a8a018"/><stop offset="0.892" stop-color="#b07010"/><stop offset="1.000" stop-color="#b03010"/></linearGradient><linearGradient id="fr8" gradientUnits="userSpaceOnUse" x1="850.3" y1="180.4" x2="972.4" y2="420"><stop offset="0.000" stop-color="#1a3aa8"/><stop offset="0.047" stop-color="#1a58c0"/><stop offset="0.121" stop-color="#1a88b0"/><stop offset="0.234" stop-color="#1a98a8"/><stop offset="0.343" stop-color="#10a070"/><stop offset="0.457" stop-color="#10a048"/><stop offset="0.571" stop-color="#30a030"/><stop offset="0.680" stop-color="#80a020"/><stop offset="0.786" stop-color="#a8a018"/><stop offset="0.891" stop-color="#b07010"/><stop offset="1.000" stop-color="#b03010"/></linearGradient><clipPath id="cTun"><ellipse cx="700" cy="405" rx="62" ry="48" transform="rotate(-20 700 405)"/></clipPath><mask id="mTun" maskUnits="userSpaceOnUse" x="0" y="0" width="1000" height="691"><rect x="0" y="0" width="1000" height="691" fill="#fff"/><ellipse cx="700" cy="405" rx="62" ry="48" transform="rotate(-20 700 405)" fill="#000"/></mask></defs><polygon points="296,242 764,121 859,176 702,256 433,319" fill="url(#gT)"/><polygon points="296,242 316.1,253.3 316.1,556.3 296,545" fill="url(#fl0)"/><polygon points="315,252.7 335.7,264.3 335.7,567.3 315,555.7" fill="url(#fl1)"/><polygon points="334.6,263.7 355.3,275.3 355.3,578.3 334.6,566.7" fill="url(#fl2)"/><polygon points="354.2,274.7 374.8,286.3 374.8,589.3 354.2,577.7" fill="url(#fl3)"/><polygon points="373.7,285.7 394.4,297.3 394.4,600.3 373.7,588.7" fill="url(#fl4)"/><polygon points="393.3,296.7 414,308.3 414,611.3 393.3,599.7" fill="url(#fl5)"/><polygon points="412.9,307.7 433,319 433,622 412.9,610.7" fill="url(#fl6)"/><polyline points="296,273.2 307.4,278.7 318.8,284.3 330.2,290.2 341.7,296.2 353.1,302.5 364.5,309 375.9,315.7 387.3,322.5 398.8,329.6 410.2,336.9 421.6,344.3 433,352" stroke="#2080e0" stroke-width="1" fill="none"/><polyline points="296,308.1 307.4,312.8 318.8,318 330.2,323.6 341.7,329.5 353.1,335.9 364.5,342.6 375.9,349.7 387.3,357.2 398.8,365.1 410.2,373.4 421.6,382.1 433,391.1" stroke="#20c0e0" stroke-width="1" fill="none"/><polyline points="296,341.4 307.4,347.2 318.8,353.1 330.2,359.2 341.7,365.5 353.1,371.9 364.5,378.5 375.9,385.3 387.3,392.2 398.8,399.4 410.2,406.6 421.6,414.1 433,421.7" stroke="#20e0b0" stroke-width="1" fill="none"/><polyline points="296,374.7 307.4,379.6 318.8,384.9 330.2,390.4 341.7,396.2 353.1,402.4 364.5,408.8 375.9,415.6 387.3,422.6 398.8,430 410.2,437.6 421.6,445.6 433,453.8" stroke="#20e050" stroke-width="1" fill="none"/><polyline points="296,410.8 307.4,414 318.8,417.8 330.2,422.2 341.7,427.2 353.1,432.7 364.5,438.8 375.9,445.5 387.3,452.7 398.8,460.6 410.2,469 421.6,477.9 433,487.5" stroke="#50e020" stroke-width="1" fill="none"/><polyline points="296,444.4 307.4,447.4 318.8,450.9 330.2,455.2 341.7,460 353.1,465.5 364.5,471.7 375.9,478.5 387.3,485.9 398.8,494 410.2,502.7 421.6,512 433,522" stroke="#b0e010" stroke-width="1" fill="none"/><polyline points="296,478.9 307.4,482 318.8,485.6 330.2,489.9 341.7,494.9 353.1,500.6 364.5,506.8 375.9,513.8 387.3,521.4 398.8,529.7 410.2,538.6 421.6,548.1 433,558.4" stroke="#e0c010" stroke-width="1" fill="none"/><polyline points="296,512.6 307.4,515.7 318.8,519.4 330.2,523.7 341.7,528.7 353.1,534.4 364.5,540.6 375.9,547.5 387.3,555.1 398.8,563.3 410.2,572.1 421.6,581.6 433,591.7" stroke="#e07010" stroke-width="1" fill="none"/><polygon points="433,319 450.9,314.8 450.9,618.4 433,623" fill="url(#ff0)"/><polygon points="448.7,315.3 467.7,310.9 467.7,614.1 448.7,619" fill="url(#ff1)"/><polygon points="465.5,311.4 484.5,306.9 484.5,609.8 465.5,614.7" fill="url(#ff2)"/><polygon points="482.4,307.4 501.3,303 501.3,605.5 482.4,610.3" fill="url(#ff3)"/><polygon points="499.2,303.5 518.1,299.1 518.1,601.2 499.2,606" fill="url(#ff4)"/><polygon points="516,299.6 535,295.1 535,596.8 516,601.7" fill="url(#ff5)"/><polygon points="532.8,295.6 551.8,291.2 551.8,592.5 532.8,597.4" fill="url(#ff6)"/><polygon points="549.6,291.7 568.6,287.2 568.6,588.2 549.6,593.1" fill="url(#ff7)"/><polygon points="566.4,287.8 585.4,283.3 585.4,583.9 566.4,588.8" fill="url(#ff8)"/><polygon points="583.2,283.8 602.2,279.4 602.2,579.6 583.2,584.5" fill="url(#ff9)"/><polygon points="600,279.9 619,275.4 619,575.3 600,580.2" fill="url(#ff10)"/><polygon points="616.9,275.9 635.8,271.5 635.8,571 616.9,575.8" fill="url(#ff11)"/><polygon points="633.7,272 652.6,267.6 652.6,566.7 633.7,571.5" fill="url(#ff12)"/><polygon points="650.5,268.1 669.5,263.6 669.5,562.3 650.5,567.2" fill="url(#ff13)"/><polygon points="667.3,264.1 686.3,259.7 686.3,558 667.3,562.9" fill="url(#ff14)"/><polygon points="684.1,260.2 702,256 702,554 684.1,558.6" fill="url(#ff15)"/><polyline points="433,331.2 455.4,328.8 477.8,326.3 500.2,323.7 522.7,320.8 545.1,317.8 567.5,314.6 589.9,311.2 612.3,307.7 634.8,303.9 657.2,300.1 679.6,296 702,291.8" stroke="#2060f0" stroke-width="1" fill="none"/><polyline points="433,357.9 455.4,355.9 477.8,353.6 500.2,351 522.7,348.2 545.1,345.1 567.5,341.7 589.9,338 612.3,334.1 634.8,329.9 657.2,325.4 679.6,320.6 702,315.6" stroke="#30a0f0" stroke-width="1" fill="none"/><polyline points="433,389.2 455.4,386.6 477.8,383.8 500.2,380.8 522.7,377.5 545.1,373.9 567.5,370.1 589.9,366.1 612.3,361.8 634.8,357.3 657.2,352.6 679.6,347.6 702,342.4" stroke="#30e0f0" stroke-width="1" fill="none"/><polyline points="433,424.2 455.4,420.3 477.8,416.4 500.2,412.5 522.7,408.5 545.1,404.4 567.5,400.4 589.9,396.3 612.3,392.1 634.8,388 657.2,383.7 679.6,379.5 702,375.2" stroke="#30f0b0" stroke-width="1" fill="none"/><polyline points="433,454.6 455.4,449.7 477.8,444.9 500.2,440.1 522.7,435.3 545.1,430.6 567.5,426 589.9,421.4 612.3,416.8 634.8,412.3 657.2,407.8 679.6,403.4 702,399" stroke="#30f050" stroke-width="1" fill="none"/><polyline points="433,496.5 455.4,492.1 477.8,487.3 500.2,482.2 522.7,476.8 545.1,471.1 567.5,465.1 589.9,458.8 612.3,452.2 634.8,445.3 657.2,438.1 679.6,430.6 702,422.9" stroke="#90f020" stroke-width="1" fill="none"/><polyline points="433,527.8 455.4,523.7 477.8,519.2 500.2,514.4 522.7,509.3 545.1,504 567.5,498.4 589.9,492.4 612.3,486.2 634.8,479.8 657.2,473 679.6,466 702,458.6" stroke="#e0f020" stroke-width="1" fill="none"/><polyline points="433,561.6 455.4,556.9 477.8,552.1 500.2,547.1 522.7,541.9 545.1,536.5 567.5,531 589.9,525.3 612.3,519.5 634.8,513.4 657.2,507.3 679.6,500.9 702,494.4" stroke="#f0a020" stroke-width="1" fill="none"/><polyline points="433,592.6 455.4,588.8 477.8,584.6 500.2,580 522.7,575.2 545.1,570 567.5,564.4 589.9,558.5 612.3,552.3 634.8,545.8 657.2,538.9 679.6,531.7 702,524.2" stroke="#f06020" stroke-width="1" fill="none"/><polygon points="702,256 720.1,246.8 720.1,545.3 702,554" fill="url(#fr0)"/><polygon points="718.8,247.4 737.5,237.9 737.5,536.8 718.8,545.9" fill="url(#fr1)"/><polygon points="736.3,238.5 755,229 755,528.4 736.3,537.4" fill="url(#fr2)"/><polygon points="753.7,229.7 772.4,220.1 772.4,519.9 753.7,529" fill="url(#fr3)"/><polygon points="771.1,220.8 789.9,211.2 789.9,511.5 771.1,520.5" fill="url(#fr4)"/><polygon points="788.6,211.9 807.3,202.3 807.3,503 788.6,512.1" fill="url(#fr5)"/><polygon points="806,203 824.7,193.5 824.7,494.6 806,503.6" fill="url(#fr6)"/><polygon points="823.5,194.1 842.2,184.6 842.2,486.1 823.5,495.2" fill="url(#fr7)"/><polygon points="840.9,185.2 859,176 859,478 840.9,486.7" fill="url(#fr8)"/><polyline points="702,288.8 715.1,280.5 728.2,272.2 741.2,263.9 754.3,255.6 767.4,247.3 780.5,238.9 793.6,230.6 806.7,222.3 819.8,214 832.8,205.7 845.9,197.3 859,189" stroke="#2060e0" stroke-width="1" fill="none"/><polyline points="702,320.7 715.1,311.5 728.2,302.4 741.2,293.3 754.3,284.1 767.4,275 780.5,265.8 793.6,256.6 806.7,247.5 819.8,238.3 832.8,229.1 845.9,219.9 859,210.7" stroke="#20a0e0" stroke-width="1" fill="none"/><polyline points="702,346.6 715.1,338.2 728.2,329.8 741.2,321.4 754.3,312.9 767.4,304.5 780.5,296.1 793.6,287.7 806.7,279.2 819.8,270.8 832.8,262.4 845.9,253.9 859,245.5" stroke="#20d0d0" stroke-width="1" fill="none"/><polyline points="702,374.6 715.1,366.6 728.2,358.6 741.2,350.7 754.3,342.7 767.4,334.7 780.5,326.7 793.6,318.7 806.7,310.7 819.8,302.7 832.8,294.7 845.9,286.7 859,278.7" stroke="#20e090" stroke-width="1" fill="none"/><polyline points="702,402 715.1,394.6 728.2,387.3 741.2,379.9 754.3,372.5 767.4,365.1 780.5,357.8 793.6,350.4 806.7,343 819.8,335.6 832.8,328.2 845.9,320.8 859,313.4" stroke="#20e050" stroke-width="1" fill="none"/><polyline points="702,428.8 715.1,422.1 728.2,415.4 741.2,408.7 754.3,401.9 767.4,395.2 780.5,388.5 793.6,381.8 806.7,375 819.8,368.3 832.8,361.6 845.9,354.9 859,348.1" stroke="#40f040" stroke-width="1" fill="none"/><polyline points="702,458.6 715.1,452.2 728.2,445.8 741.2,439.3 754.3,432.9 767.4,426.4 780.5,420 793.6,413.6 806.7,407.1 819.8,400.7 832.8,394.2 845.9,387.8 859,381.4" stroke="#b0f030" stroke-width="1" fill="none"/><polyline points="702,493.2 715.1,486.5 728.2,479.9 741.2,473.2 754.3,466.5 767.4,459.8 780.5,453.1 793.6,446.5 806.7,439.8 819.8,433.1 832.8,426.4 845.9,419.8 859,413.1" stroke="#f0e020" stroke-width="1" fill="none"/><polyline points="702,525.1 715.1,518.4 728.2,511.7 741.2,505 754.3,498.3 767.4,491.6 780.5,485 793.6,478.3 806.7,471.6 819.8,464.9 832.8,458.2 845.9,451.5 859,444.8" stroke="#f08020" stroke-width="1" fill="none"/><path d="M245.6,236.3L273.2,229.2 329.1,214.7 367.2,204.9 400.6,196.2 431.3,188.3 460.1,180.8 487.5,173.8 513.7,167 539.1,160.4 563.6,154.1 587.5,147.9 610.8,141.9 633.6,136 655.9,130.2 677.7,124.6 699.2,119 720.4,113.5 741.2,108.2 761.7,102.9M268.5,249.1L296,242 351.9,227.5 390,217.7 423.4,209.1 454.1,201.1 482.9,193.7 510.3,186.6 536.6,179.8 561.9,173.3 586.5,166.9 610.3,160.7 633.6,154.7 656.4,148.8 678.7,143.1 700.6,137.4 722.1,131.8 743.2,126.4 764,121 784.5,115.7M291.3,262L318.8,254.8 367,239.1 400.5,229.9 448.6,217 477.5,212.6 502.8,205.4 535.2,195.3 562.1,190.2 581.5,188.8 600.9,178.3 638.1,175.9 649.7,166.8 686.5,161.6 699.2,155.5 714,149.4 739.1,142.6 765.6,136.1 786.8,133.8 807.3,128.5M314.1,274.8L341.7,267.7 395.8,249.7 438.1,245.8 472.4,231.9 495.5,223.8 535,219.6 557.8,214.2 585.8,205.4 615,201.6 629.8,195.7 663.9,187.8 676.1,181.1 703.6,175.2 721.5,170.7 740.4,163.3 777.1,159.7 789,156.2 809.7,146.7 830.2,141.4M337,287.6L364.5,280.5 419.6,265 448.6,256.2 481.9,246.6 512.7,239.4 548.7,233.6 574,226.2 605.6,217.8 631.9,209.3 647.6,204.9 675.3,199.4 700.5,191.4 721.8,183.9 737.4,180 768.2,179.6 790,170.3 808,162.5 832.5,159.5 853,154.2M359.8,300.5L387.3,293.3 433.8,281.4 488.7,271.3 515.3,263.2 547.3,251.3 578.9,247.3 597.4,240.6 637.3,232.9 653.7,226 680.7,221 704.4,215 718.3,207 755.4,200.8 763,193.1 789.1,186.2 804.4,181.8 829.6,174.6 855.3,172.3 875.8,167M382.6,313.3L410.2,306.2 455.3,293.9 504.4,280.8 533.4,275.1 566.5,266.6 597.9,255.7 628.8,250.3 652.3,245.1 669.7,238.7 695,232.1 725.9,221.3 747.1,219.7 778.2,213.8 786,204.8 810.3,201.3 831.9,194.9 863.1,193.5 878.2,185.2 898.7,179.9M405.5,326.1L433,319 488.9,304.5 527,294.7 560.4,286.1 591.1,278.1 619.9,270.7 647.3,263.6 673.6,256.8 698.9,250.3 723.5,243.9 747.3,237.7 770.6,231.7 793.4,225.8 815.7,220.1 837.6,214.4 859.1,208.8 880.2,203.4 901,198 921.5,192.7M428.3,339L455.8,331.8 511.7,317.4 549.8,307.5 583.3,298.9 613.9,291 642.7,283.5 670.1,276.4 696.4,269.6 721.7,263.1 746.3,256.7 770.2,250.6 793.5,244.5 816.2,238.7 838.5,232.9 860.4,227.2 881.9,221.7 903,216.2 923.8,210.8 944.3,205.5M245.6,236.3L268.5,249.1 291.3,262 314.1,274.8 337,287.6 359.8,300.5 382.6,313.3 405.5,326.1 428.3,339M273.2,229.2L296,242 318.8,254.8 341.7,267.7 364.5,280.5 387.3,293.3 410.2,306.2 433,319 455.8,331.8M329.1,214.7L351.9,227.5 367,239.1 395.8,249.7 419.6,265 433.8,281.4 455.3,293.9 488.9,304.5 511.7,317.4M367.2,204.9L390,217.7 400.5,229.9 438.1,245.8 448.6,256.2 488.7,271.3 504.4,280.8 527,294.7 549.8,307.5M400.6,196.2L423.4,209.1 448.6,217 472.4,231.9 481.9,246.6 515.3,263.2 533.4,275.1 560.4,286.1 583.3,298.9M431.3,188.3L454.1,201.1 477.5,212.6 495.5,223.8 512.7,239.4 547.3,251.3 566.5,266.6 591.1,278.1 613.9,291M460.1,180.8L482.9,193.7 502.8,205.4 535,219.6 548.7,233.6 578.9,247.3 597.9,255.7 619.9,270.7 642.7,283.5M487.5,173.8L510.3,186.6 535.2,195.3 557.8,214.2 574,226.2 597.4,240.6 628.8,250.3 647.3,263.6 670.1,276.4M513.7,167L536.6,179.8 562.1,190.2 585.8,205.4 605.6,217.8 637.3,232.9 652.3,245.1 673.6,256.8 696.4,269.6M539.1,160.4L561.9,173.3 581.5,188.8 615,201.6 631.9,209.3 653.7,226 669.7,238.7 698.9,250.3 721.7,263.1M563.6,154.1L586.5,166.9 600.9,178.3 629.8,195.7 647.6,204.9 680.7,221 695,232.1 723.5,243.9 746.3,256.7M587.5,147.9L610.3,160.7 638.1,175.9 663.9,187.8 675.3,199.4 704.4,215 725.9,221.3 747.3,237.7 770.2,250.6M610.8,141.9L633.6,154.7 649.7,166.8 676.1,181.1 700.5,191.4 718.3,207 747.1,219.7 770.6,231.7 793.5,244.5M633.6,136L656.4,148.8 686.5,161.6 703.6,175.2 721.8,183.9 755.4,200.8 778.2,213.8 793.4,225.8 816.2,238.7M655.9,130.2L678.7,143.1 699.2,155.5 721.5,170.7 737.4,180 763,193.1 786,204.8 815.7,220.1 838.5,232.9M677.7,124.6L700.6,137.4 714,149.4 740.4,163.3 768.2,179.6 789.1,186.2 810.3,201.3 837.6,214.4 860.4,227.2M699.2,119L722.1,131.8 739.1,142.6 777.1,159.7 790,170.3 804.4,181.8 831.9,194.9 859.1,208.8 881.9,221.7M720.4,113.5L743.2,126.4 765.6,136.1 789,156.2 808,162.5 829.6,174.6 863.1,193.5 880.2,203.4 903,216.2M741.2,108.2L764,121 786.8,133.8 809.7,146.7 832.5,159.5 855.3,172.3 878.2,185.2 901,198 923.8,210.8M761.7,102.9L784.5,115.7 807.3,128.5 830.2,141.4 853,154.2 875.8,167 898.7,179.9 921.5,192.7 944.3,205.5M273.2,229.2L268.5,249.1M296,242L291.3,262M291.3,262L341.7,267.7M314.1,274.8L364.5,280.5M337,287.6L387.3,293.3M387.3,293.3L382.6,313.3M410.2,306.2L405.5,326.1M433,319L428.3,339M273.2,229.2L351.9,227.5M296,242L367,239.1M367,239.1L341.7,267.7M395.8,249.7L364.5,280.5M419.6,265L387.3,293.3M433.8,281.4L410.2,306.2M455.3,293.9L433,319M488.9,304.5L455.8,331.8M329.1,214.7L390,217.7M390,217.7L367,239.1M367,239.1L438.1,245.8M395.8,249.7L448.6,256.2M419.6,265L488.7,271.3M433.8,281.4L504.4,280.8M455.3,293.9L527,294.7M527,294.7L511.7,317.4M400.6,196.2L390,217.7M390,217.7L448.6,217M448.6,217L438.1,245.8M472.4,231.9L448.6,256.2M481.9,246.6L488.7,271.3M488.7,271.3L533.4,275.1M504.4,280.8L560.4,286.1M527,294.7L583.3,298.9M400.6,196.2L454.1,201.1M423.4,209.1L477.5,212.6M477.5,212.6L472.4,231.9M495.5,223.8L481.9,246.6M512.7,239.4L515.3,263.2M515.3,263.2L566.5,266.6M566.5,266.6L560.4,286.1M591.1,278.1L583.3,298.9M431.3,188.3L482.9,193.7M482.9,193.7L477.5,212.6M502.8,205.4L495.5,223.8M535,219.6L512.7,239.4M548.7,233.6L547.3,251.3M547.3,251.3L597.9,255.7M566.5,266.6L619.9,270.7M619.9,270.7L613.9,291M460.1,180.8L510.3,186.6M510.3,186.6L502.8,205.4M535.2,195.3L535,219.6M535,219.6L574,226.2M548.7,233.6L597.4,240.6M597.4,240.6L597.9,255.7M628.8,250.3L619.9,270.7M619.9,270.7L670.1,276.4M487.5,173.8L536.6,179.8M510.3,186.6L562.1,190.2M562.1,190.2L557.8,214.2M585.8,205.4L574,226.2M574,226.2L637.3,232.9M637.3,232.9L628.8,250.3M652.3,245.1L647.3,263.6M673.6,256.8L670.1,276.4M513.7,167L561.9,173.3M561.9,173.3L562.1,190.2M562.1,190.2L615,201.6M585.8,205.4L631.9,209.3M631.9,209.3L637.3,232.9M653.7,226L652.3,245.1M669.7,238.7L673.6,256.8M698.9,250.3L696.4,269.6M539.1,160.4L586.5,166.9M586.5,166.9L581.5,188.8M600.9,178.3L615,201.6M615,201.6L647.6,204.9M631.9,209.3L680.7,221M653.7,226L695,232.1M669.7,238.7L723.5,243.9M723.5,243.9L721.7,263.1M563.6,154.1L610.3,160.7M586.5,166.9L638.1,175.9M600.9,178.3L663.9,187.8M663.9,187.8L647.6,204.9M647.6,204.9L704.4,215M680.7,221L725.9,221.3M725.9,221.3L723.5,243.9M747.3,237.7L746.3,256.7M587.5,147.9L633.6,154.7M633.6,154.7L638.1,175.9M649.7,166.8L663.9,187.8M676.1,181.1L675.3,199.4M700.5,191.4L704.4,215M704.4,215L747.1,219.7M725.9,221.3L770.6,231.7M747.3,237.7L793.5,244.5M610.8,141.9L656.4,148.8M656.4,148.8L649.7,166.8M649.7,166.8L703.6,175.2M676.1,181.1L721.8,183.9M721.8,183.9L718.3,207M755.4,200.8L747.1,219.7M747.1,219.7L793.4,225.8M793.4,225.8L793.5,244.5M655.9,130.2L656.4,148.8M678.7,143.1L686.5,161.6M686.5,161.6L721.5,170.7M721.5,170.7L721.8,183.9M721.8,183.9L763,193.1M755.4,200.8L786,204.8M786,204.8L793.4,225.8M815.7,220.1L816.2,238.7M677.7,124.6L678.7,143.1M700.6,137.4L699.2,155.5M714,149.4L721.5,170.7M721.5,170.7L768.2,179.6M768.2,179.6L763,193.1M789.1,186.2L786,204.8M810.3,201.3L815.7,220.1M837.6,214.4L838.5,232.9M677.7,124.6L722.1,131.8M722.1,131.8L714,149.4M714,149.4L777.1,159.7M777.1,159.7L768.2,179.6M790,170.3L789.1,186.2M804.4,181.8L810.3,201.3M831.9,194.9L837.6,214.4M837.6,214.4L881.9,221.7M720.4,113.5L722.1,131.8M743.2,126.4L739.1,142.6M765.6,136.1L777.1,159.7M777.1,159.7L808,162.5M790,170.3L829.6,174.6M804.4,181.8L863.1,193.5M831.9,194.9L880.2,203.4M859.1,208.8L903,216.2M720.4,113.5L764,121M764,121L765.6,136.1M786.8,133.8L789,156.2M809.7,146.7L808,162.5M808,162.5L855.3,172.3M855.3,172.3L863.1,193.5M878.2,185.2L880.2,203.4M880.2,203.4L923.8,210.8M761.7,102.9L764,121M784.5,115.7L786.8,133.8M786.8,133.8L830.2,141.4M830.2,141.4L832.5,159.5M832.5,159.5L875.8,167M855.3,172.3L898.7,179.9M898.7,179.9L901,198M921.5,192.7L923.8,210.8" stroke="#828288" stroke-width="1" fill="none" shape-rendering="crispEdges" clip-path="url(#cT)"/><path d="M276.4,187.7L296,198.7 315.6,209.7 335.1,220.7 354.7,231.7 374.3,242.7 393.9,253.7 413.4,264.7 433,275.7 452.6,286.7M276.4,231L296,242 315.6,253 335.1,264 354.7,275 374.3,286 393.9,297 413.4,308 433,319 452.6,330M276.4,274.3L296,285.3 315.6,296.3 335.1,307.3 354.7,318.3 374.3,329.3 393.9,340.3 413.4,351.3 433,362.3 452.6,373.3M276.4,317.6L296,328.6 315.6,339.6 335.1,350.6 354.7,361.6 374.3,372.6 393.9,383.6 413.4,394.6 433,405.6 452.6,416.6M276.4,360.9L296,371.9 315.6,382.9 335.1,393.9 354.7,404.9 374.3,415.9 393.9,426.9 413.4,437.9 433,448.9 452.6,459.9M276.4,404.1L296,415.1 315.6,426.1 335.1,437.1 354.7,448.1 374.3,459.1 393.9,470.1 413.4,481.1 433,492.1 452.6,503.1M276.4,447.4L296,458.4 315.6,469.4 335.1,480.4 354.7,491.4 374.3,502.4 393.9,513.4 413.4,524.4 433,535.4 452.6,546.4M276.4,490.7L296,501.7 315.6,512.7 335.1,523.7 354.7,534.7 374.3,545.7 393.9,556.7 413.4,567.7 433,578.7 452.6,589.7M276.4,534L296,545 315.6,556 335.1,567 354.7,578 374.3,589 393.9,600 413.4,611 433,622 452.6,633M276.4,577.3L296,588.3 315.6,599.3 335.1,610.3 354.7,621.3 374.3,632.3 393.9,643.3 413.4,654.3 433,665.3 452.6,676.3M276.4,187.7L276.4,231 276.4,274.3 276.4,317.6 276.4,360.9 276.4,404.1 276.4,447.4 276.4,490.7 276.4,534 276.4,577.3M296,198.7L296,242 296,285.3 296,328.6 296,371.9 296,415.1 296,458.4 296,501.7 296,545 296,588.3M315.6,209.7L315.6,253 315.6,296.3 315.6,339.6 315.6,382.9 315.6,426.1 315.6,469.4 315.6,512.7 315.6,556 315.6,599.3M335.1,220.7L335.1,264 335.1,307.3 335.1,350.6 335.1,393.9 335.1,437.1 335.1,480.4 335.1,523.7 335.1,567 335.1,610.3M354.7,231.7L354.7,275 354.7,318.3 354.7,361.6 354.7,404.9 354.7,448.1 354.7,491.4 354.7,534.7 354.7,578 354.7,621.3M374.3,242.7L374.3,286 374.3,329.3 374.3,372.6 374.3,415.9 374.3,459.1 374.3,502.4 374.3,545.7 374.3,589 374.3,632.3M393.9,253.7L393.9,297 393.9,340.3 393.9,383.6 393.9,426.9 393.9,470.1 393.9,513.4 393.9,556.7 393.9,600 393.9,643.3M413.4,264.7L413.4,308 413.4,351.3 413.4,394.6 413.4,437.9 413.4,481.1 413.4,524.4 413.4,567.7 413.4,611 413.4,654.3M433,275.7L433,319 433,362.3 433,405.6 433,448.9 433,492.1 433,535.4 433,578.7 433,622 433,665.3M452.6,286.7L452.6,330 452.6,373.3 452.6,416.6 452.6,459.9 452.6,503.1 452.6,546.4 452.6,589.7 452.6,633 452.6,676.3M296,198.7L276.4,231M296,242L276.4,274.3M296,285.3L276.4,317.6M296,328.6L276.4,360.9M296,371.9L276.4,404.1M296,415.1L276.4,447.4M296,458.4L276.4,490.7M296,501.7L276.4,534M296,545L276.4,577.3M315.6,209.7L296,242M315.6,253L296,285.3M315.6,296.3L296,328.6M315.6,339.6L296,371.9M315.6,382.9L296,415.1M315.6,426.1L296,458.4M315.6,469.4L296,501.7M315.6,512.7L296,545M315.6,556L296,588.3M335.1,220.7L315.6,253M335.1,264L315.6,296.3M335.1,307.3L315.6,339.6M335.1,350.6L315.6,382.9M335.1,393.9L315.6,426.1M335.1,437.1L315.6,469.4M335.1,480.4L315.6,512.7M335.1,523.7L315.6,556M335.1,567L315.6,599.3M354.7,231.7L335.1,264M354.7,275L335.1,307.3M354.7,318.3L335.1,350.6M354.7,361.6L335.1,393.9M354.7,404.9L335.1,437.1M354.7,448.1L335.1,480.4M354.7,491.4L335.1,523.7M354.7,534.7L335.1,567M354.7,578L335.1,610.3M374.3,242.7L354.7,275M374.3,286L354.7,318.3M374.3,329.3L354.7,361.6M374.3,372.6L354.7,404.9M374.3,415.9L354.7,448.1M374.3,459.1L354.7,491.4M374.3,502.4L354.7,534.7M374.3,545.7L354.7,578M374.3,589L354.7,621.3M393.9,253.7L374.3,286M393.9,297L374.3,329.3M393.9,340.3L374.3,372.6M393.9,383.6L374.3,415.9M393.9,426.9L374.3,459.1M393.9,470.1L374.3,502.4M393.9,513.4L374.3,545.7M393.9,556.7L374.3,589M393.9,600L374.3,632.3M413.4,264.7L393.9,297M413.4,308L393.9,340.3M413.4,351.3L393.9,383.6M413.4,394.6L393.9,426.9M413.4,437.9L393.9,470.1M413.4,481.1L393.9,513.4M413.4,524.4L393.9,556.7M413.4,567.7L393.9,600M413.4,611L393.9,643.3M433,275.7L413.4,308M433,319L413.4,351.3M433,362.3L413.4,394.6M433,405.6L413.4,437.9M433,448.9L413.4,481.1M433,492.1L413.4,524.4M433,535.4L413.4,567.7M433,578.7L413.4,611M433,622L413.4,654.3M452.6,286.7L433,319M452.6,330L433,362.3M452.6,373.3L433,405.6M452.6,416.6L433,448.9M452.6,459.9L433,492.1M452.6,503.1L433,535.4M452.6,546.4L433,578.7M452.6,589.7L433,622M452.6,633L433,665.3" stroke="#828288" stroke-width="1" stroke-opacity="0.8" fill="none" shape-rendering="crispEdges" clip-path="url(#cL)"/><path d="M424.6,305L441.4,301 458.2,297.1 475,293.2 491.8,289.2 508.7,285.3 525.5,281.3 542.3,277.4 559.1,273.5 575.9,269.5 592.7,265.6 609.5,261.7 626.3,257.7 643.2,253.8 660,249.8 676.8,245.9 693.6,242 710.4,238 727.2,234.1M416.2,322.9L433,319 449.8,315.1 466.6,311.1 483.4,307.2 500.2,303.2 517.1,299.3 533.9,295.4 550.7,291.4 567.5,287.5 584.3,283.6 601.1,279.6 617.9,275.7 634.8,271.8 651.6,267.8 668.4,263.9 685.2,259.9 702,256 718.8,252.1M421.7,341.5L441.5,335.9 455.7,332.4 476.9,324.4 492.3,325.1 504.6,321.1 526.5,317.8 538.6,319.7 561.5,314.2 572.6,304.5 588.8,305.9 607.6,294.9 625.7,298.6 645.8,287.2 657,291.3 677.4,284.3 690.1,274.8 712,273.4 723.6,275.9M416.2,366.5L433,363.1 446.2,360.1 466.2,350.2 483.9,351.9 498.3,340.6 517.3,337.3 530.6,333.4 546.9,330 565.9,326.5 586.5,321.6 601.1,317 616.7,311.8 632.7,308 653.5,308.4 665.8,304.8 688.8,295.8 704.7,295.3 718.8,296M423.7,381.4L443,381.4 456.9,376.7 476.8,370.2 491,364.1 504.9,358.7 521.9,360.6 540.2,350.8 555.6,353.7 579,346.6 590.9,339.7 607.8,337.8 623.5,334 641.2,334.8 663.9,325.5 674.6,327 692,317.1 706.2,314 727,310.3M416.2,402.1L433,395.9 446.4,394.1 462.8,386.7 481.8,384.2 501,382.5 519.2,379.5 535.7,377.7 549.8,369.2 571.6,362.4 586.2,363.6 597.3,362.8 621.2,355.3 636.7,353.4 648.5,347.9 668.4,346.2 687.7,341.6 702.7,338.7 720.3,332.7M422.3,414.9L438.3,414.2 454.9,414.6 475.5,407.9 492.9,404.3 508.6,394.4 528,396.7 542.3,391.4 560.4,382.9 577.9,380.5 589.1,378 611.5,372.2 628.4,375.3 643.1,366.4 659.8,365.2 679,360.1 694.8,351.5 707.4,350.2 729.3,345.5M416.2,434.3L433,432.6 451.3,432.1 468.1,424.6 483.6,422.5 500,415.6 520.4,411.6 537.9,414 546.6,407.7 570.2,406.7 583.9,397.3 598.7,399.8 615.5,392.7 631.7,388.4 655.4,379.4 671.1,379 688.4,376.7 699.7,375.8 718.7,363.6M420.4,455.1L441,448.6 455.2,445.7 473.5,445.7 487.7,441.6 511.5,430.5 529.1,431.6 545.7,424 558,422 580.1,418.5 591.5,414.5 607.6,407.4 623,410.6 641.4,407.2 657.9,397.5 676.9,392.4 692.5,395.4 713.6,389.2 728.3,386.6M416.2,473.6L433,465.4 451.8,464.4 468.7,462.1 481.6,454 503.8,449.5 516.8,448.3 532.2,448 554.7,438.7 568.8,435.8 584.8,432.8 598.3,427.7 615.5,429.9 634.7,419.6 655,421.4 668,411.2 682.6,407.3 700.7,403.1 716.6,400.8M425.2,490.7L443.5,482.6 457.5,480.2 474,474.8 488.2,471 512.6,464 525.5,465.1 545.3,457.1 557.2,454.6 575.1,452 596.5,450.3 612.7,439.8 622.4,443.1 646.5,435.5 660.7,428.3 675.9,432.3 696.3,426.9 714.4,417.8 723.9,414.8M416.2,507.1L433,503.5 451.1,499.6 466.3,494.4 479.6,493 498,489.8 518.3,480.2 530.7,476.9 551.8,475.5 564.2,467.6 584.5,466.9 600.2,460.4 618.8,454.4 633.1,454.6 655.4,450.8 671.6,445.7 683,441.2 705.9,439.4 717.2,431.4M424.6,520.5L440.7,513.6 459.6,514.2 472.7,504.4 490.5,503.2 510.2,496.8 528,496.8 542.3,489.4 563,485.3 578.6,481.1 590.4,482.4 607.8,479.7 626.3,469.6 640.8,467.9 661.4,467.2 673.8,460 691.2,460.4 707.4,449.5 723.5,448.4M416.2,539L433,535.9 453.4,526.2 464,528.2 485.5,516.5 501.6,515.3 516,511.5 531.1,505.6 548.8,504 571.3,497 588.2,493.7 599.9,495.5 620.6,487.8 631,485.7 650.5,484.4 665.8,476.7 688.5,468.9 701.3,471.7 721.1,461.4M420.7,546.5L444.9,542.2 460.3,543.1 473.7,535.6 495.7,532.9 506.7,531 523.9,523.8 538.1,523.9 562.6,517.3 579.6,509 590.5,509.6 613.4,507.7 625.4,499.9 642.6,497.6 663.6,490.4 679.3,490.7 696.3,487 711.3,480.3 725.7,477.2M416.2,561.7L433,562.4 447.7,554.2 462.7,554.1 482,552.5 503.5,547.5 515.1,538.6 530.5,537.8 552.5,532.3 565.3,529.1 585.3,526.2 603.2,523.2 619.3,514.4 637.6,511.3 652.1,508.5 670.4,503 683.1,500.4 699.1,501 719.5,492.4M423.7,579.6L441.5,570.4 460.8,568.7 479.2,560.7 491.6,562.5 511.5,558.5 521.6,552 539.1,547.3 563.1,544.2 579.5,539 595.8,535.7 607.5,535.1 630.1,525.4 644,525.5 657.6,520.7 673.8,515.8 691.5,514.3 711.7,506.9 723.1,505.1M416.2,589.1L433,585.2 452.3,582.9 463,577.6 482.6,575.8 501.4,568.5 514.2,569.3 533.1,562.3 549.1,562.8 565.9,556.4 583.1,551.4 604.2,550.2 616.8,542.2 636.7,537.5 647.4,539.5 667.7,534.2 684.4,530.7 701.7,522.1 714.7,521.5M425.8,603.8L438,599.2 457.1,594 472.1,589.1 492,588.4 505.4,582.6 528,580.2 539.7,572.3 562.8,572.1 575.8,563.4 596.3,560.7 612.9,558.2 629.1,551.6 645.6,548.1 659.2,548.7 679.5,539.9 691.2,538.5 710.6,533.9 724.1,529.9M416.2,617.8L433,611.9 452,604.4 469.5,600.8 484.3,599.8 501.3,594.4 516.4,592.5 533.3,589 550.2,583.7 563.5,581.7 584.2,574.6 603.3,573.3 617.6,566.4 634.5,562 648.4,560.7 664.9,556.9 685.3,549.8 703.1,545.8 720.8,545.8M424.6,625L441.4,621 458.2,617.1 475,613.2 491.8,609.2 508.7,605.3 525.5,601.3 542.3,597.4 559.1,593.5 575.9,589.5 592.7,585.6 609.5,581.7 626.3,577.7 643.2,573.8 660,569.8 676.8,565.9 693.6,562 710.4,558 727.2,554.1M416.2,642.9L433,639 449.8,635.1 466.6,631.1 483.4,627.2 500.2,623.2 517.1,619.3 533.9,615.4 550.7,611.4 567.5,607.5 584.3,603.6 601.1,599.6 617.9,595.7 634.8,591.8 651.6,587.8 668.4,583.9 685.2,579.9 702,576 718.8,572.1M416.2,322.9L424.6,305 433,319 441.4,301 449.8,315.1 458.2,297.1 466.6,311.1 475,293.2 483.4,307.2 491.8,289.2 500.2,303.2 508.7,285.3 517.1,299.3 525.5,281.3 533.9,295.4 542.3,277.4 550.7,291.4 559.1,273.5 567.5,287.5 575.9,269.5 584.3,283.6 592.7,265.6 601.1,279.6 609.5,261.7 617.9,275.7 626.3,257.7 634.8,271.8 643.2,253.8 651.6,267.8 660,249.8 668.4,263.9 676.8,245.9 685.2,259.9 693.6,242 702,256 710.4,238 718.8,252.1 727.2,234.1M416.2,322.9L421.7,341.5 433,319 441.5,335.9 449.8,315.1 455.7,332.4 466.6,311.1 476.9,324.4 483.4,307.2 492.3,325.1 500.2,303.2 504.6,321.1 517.1,299.3 526.5,317.8 533.9,295.4 538.6,319.7 550.7,291.4 561.5,314.2 567.5,287.5 572.6,304.5 584.3,283.6 588.8,305.9 601.1,279.6 607.6,294.9 617.9,275.7 625.7,298.6 634.8,271.8 645.8,287.2 651.6,267.8 657,291.3 668.4,263.9 677.4,284.3 685.2,259.9 690.1,274.8 702,256 712,273.4 718.8,252.1 723.6,275.9M416.2,366.5L421.7,341.5 433,363.1 441.5,335.9 446.2,360.1 455.7,332.4 466.2,350.2 476.9,324.4 483.9,351.9 492.3,325.1 498.3,340.6 504.6,321.1 517.3,337.3 526.5,317.8 530.6,333.4 538.6,319.7 546.9,330 561.5,314.2 565.9,326.5 572.6,304.5 586.5,321.6 588.8,305.9 601.1,317 607.6,294.9 616.7,311.8 625.7,298.6 632.7,308 645.8,287.2 653.5,308.4 657,291.3 665.8,304.8 677.4,284.3 688.8,295.8 690.1,274.8 704.7,295.3 712,273.4 718.8,296 723.6,275.9M416.2,366.5L423.7,381.4 433,363.1 443,381.4 446.2,360.1 456.9,376.7 466.2,350.2 476.8,370.2 483.9,351.9 491,364.1 498.3,340.6 504.9,358.7 517.3,337.3 521.9,360.6 530.6,333.4 540.2,350.8 546.9,330 555.6,353.7 565.9,326.5 579,346.6 586.5,321.6 590.9,339.7 601.1,317 607.8,337.8 616.7,311.8 623.5,334 632.7,308 641.2,334.8 653.5,308.4 663.9,325.5 665.8,304.8 674.6,327 688.8,295.8 692,317.1 704.7,295.3 706.2,314 718.8,296 727,310.3M416.2,402.1L423.7,381.4 433,395.9 443,381.4 446.4,394.1 456.9,376.7 462.8,386.7 476.8,370.2 481.8,384.2 491,364.1 501,382.5 504.9,358.7 519.2,379.5 521.9,360.6 535.7,377.7 540.2,350.8 549.8,369.2 555.6,353.7 571.6,362.4 579,346.6 586.2,363.6 590.9,339.7 597.3,362.8 607.8,337.8 621.2,355.3 623.5,334 636.7,353.4 641.2,334.8 648.5,347.9 663.9,325.5 668.4,346.2 674.6,327 687.7,341.6 692,317.1 702.7,338.7 706.2,314 720.3,332.7 727,310.3M416.2,402.1L422.3,414.9 433,395.9 438.3,414.2 446.4,394.1 454.9,414.6 462.8,386.7 475.5,407.9 481.8,384.2 492.9,404.3 501,382.5 508.6,394.4 519.2,379.5 528,396.7 535.7,377.7 542.3,391.4 549.8,369.2 560.4,382.9 571.6,362.4 577.9,380.5 586.2,363.6 589.1,378 597.3,362.8 611.5,372.2 621.2,355.3 628.4,375.3 636.7,353.4 643.1,366.4 648.5,347.9 659.8,365.2 668.4,346.2 679,360.1 687.7,341.6 694.8,351.5 702.7,338.7 707.4,350.2 720.3,332.7 729.3,345.5M416.2,434.3L422.3,414.9 433,432.6 438.3,414.2 451.3,432.1 454.9,414.6 468.1,424.6 475.5,407.9 483.6,422.5 492.9,404.3 500,415.6 508.6,394.4 520.4,411.6 528,396.7 537.9,414 542.3,391.4 546.6,407.7 560.4,382.9 570.2,406.7 577.9,380.5 583.9,397.3 589.1,378 598.7,399.8 611.5,372.2 615.5,392.7 628.4,375.3 631.7,388.4 643.1,366.4 655.4,379.4 659.8,365.2 671.1,379 679,360.1 688.4,376.7 694.8,351.5 699.7,375.8 707.4,350.2 718.7,363.6 729.3,345.5M416.2,434.3L420.4,455.1 433,432.6 441,448.6 451.3,432.1 455.2,445.7 468.1,424.6 473.5,445.7 483.6,422.5 487.7,441.6 500,415.6 511.5,430.5 520.4,411.6 529.1,431.6 537.9,414 545.7,424 546.6,407.7 558,422 570.2,406.7 580.1,418.5 583.9,397.3 591.5,414.5 598.7,399.8 607.6,407.4 615.5,392.7 623,410.6 631.7,388.4 641.4,407.2 655.4,379.4 657.9,397.5 671.1,379 676.9,392.4 688.4,376.7 692.5,395.4 699.7,375.8 713.6,389.2 718.7,363.6 728.3,386.6M416.2,473.6L420.4,455.1 433,465.4 441,448.6 451.8,464.4 455.2,445.7 468.7,462.1 473.5,445.7 481.6,454 487.7,441.6 503.8,449.5 511.5,430.5 516.8,448.3 529.1,431.6 532.2,448 545.7,424 554.7,438.7 558,422 568.8,435.8 580.1,418.5 584.8,432.8 591.5,414.5 598.3,427.7 607.6,407.4 615.5,429.9 623,410.6 634.7,419.6 641.4,407.2 655,421.4 657.9,397.5 668,411.2 676.9,392.4 682.6,407.3 692.5,395.4 700.7,403.1 713.6,389.2 716.6,400.8 728.3,386.6M416.2,473.6L425.2,490.7 433,465.4 443.5,482.6 451.8,464.4 457.5,480.2 468.7,462.1 474,474.8 481.6,454 488.2,471 503.8,449.5 512.6,464 516.8,448.3 525.5,465.1 532.2,448 545.3,457.1 554.7,438.7 557.2,454.6 568.8,435.8 575.1,452 584.8,432.8 596.5,450.3 598.3,427.7 612.7,439.8 615.5,429.9 622.4,443.1 634.7,419.6 646.5,435.5 655,421.4 660.7,428.3 668,411.2 675.9,432.3 682.6,407.3 696.3,426.9 700.7,403.1 714.4,417.8 716.6,400.8 723.9,414.8M416.2,507.1L425.2,490.7 433,503.5 443.5,482.6 451.1,499.6 457.5,480.2 466.3,494.4 474,474.8 479.6,493 488.2,471 498,489.8 512.6,464 518.3,480.2 525.5,465.1 530.7,476.9 545.3,457.1 551.8,475.5 557.2,454.6 564.2,467.6 575.1,452 584.5,466.9 596.5,450.3 600.2,460.4 612.7,439.8 618.8,454.4 622.4,443.1 633.1,454.6 646.5,435.5 655.4,450.8 660.7,428.3 671.6,445.7 675.9,432.3 683,441.2 696.3,426.9 705.9,439.4 714.4,417.8 717.2,431.4 723.9,414.8M416.2,507.1L424.6,520.5 433,503.5 440.7,513.6 451.1,499.6 459.6,514.2 466.3,494.4 472.7,504.4 479.6,493 490.5,503.2 498,489.8 510.2,496.8 518.3,480.2 528,496.8 530.7,476.9 542.3,489.4 551.8,475.5 563,485.3 564.2,467.6 578.6,481.1 584.5,466.9 590.4,482.4 600.2,460.4 607.8,479.7 618.8,454.4 626.3,469.6 633.1,454.6 640.8,467.9 655.4,450.8 661.4,467.2 671.6,445.7 673.8,460 683,441.2 691.2,460.4 705.9,439.4 707.4,449.5 717.2,431.4 723.5,448.4M416.2,539L424.6,520.5 433,535.9 440.7,513.6 453.4,526.2 459.6,514.2 464,528.2 472.7,504.4 485.5,516.5 490.5,503.2 501.6,515.3 510.2,496.8 516,511.5 528,496.8 531.1,505.6 542.3,489.4 548.8,504 563,485.3 571.3,497 578.6,481.1 588.2,493.7 590.4,482.4 599.9,495.5 607.8,479.7 620.6,487.8 626.3,469.6 631,485.7 640.8,467.9 650.5,484.4 661.4,467.2 665.8,476.7 673.8,460 688.5,468.9 691.2,460.4 701.3,471.7 707.4,449.5 721.1,461.4 723.5,448.4M416.2,539L420.7,546.5 433,535.9 444.9,542.2 453.4,526.2 460.3,543.1 464,528.2 473.7,535.6 485.5,516.5 495.7,532.9 501.6,515.3 506.7,531 516,511.5 523.9,523.8 531.1,505.6 538.1,523.9 548.8,504 562.6,517.3 571.3,497 579.6,509 588.2,493.7 590.5,509.6 599.9,495.5 613.4,507.7 620.6,487.8 625.4,499.9 631,485.7 642.6,497.6 650.5,484.4 663.6,490.4 665.8,476.7 679.3,490.7 688.5,468.9 696.3,487 701.3,471.7 711.3,480.3 721.1,461.4 725.7,477.2M416.2,561.7L420.7,546.5 433,562.4 444.9,542.2 447.7,554.2 460.3,543.1 462.7,554.1 473.7,535.6 482,552.5 495.7,532.9 503.5,547.5 506.7,531 515.1,538.6 523.9,523.8 530.5,537.8 538.1,523.9 552.5,532.3 562.6,517.3 565.3,529.1 579.6,509 585.3,526.2 590.5,509.6 603.2,523.2 613.4,507.7 619.3,514.4 625.4,499.9 637.6,511.3 642.6,497.6 652.1,508.5 663.6,490.4 670.4,503 679.3,490.7 683.1,500.4 696.3,487 699.1,501 711.3,480.3 719.5,492.4 725.7,477.2M416.2,561.7L423.7,579.6 433,562.4 441.5,570.4 447.7,554.2 460.8,568.7 462.7,554.1 479.2,560.7 482,552.5 491.6,562.5 503.5,547.5 511.5,558.5 515.1,538.6 521.6,552 530.5,537.8 539.1,547.3 552.5,532.3 563.1,544.2 565.3,529.1 579.5,539 585.3,526.2 595.8,535.7 603.2,523.2 607.5,535.1 619.3,514.4 630.1,525.4 637.6,511.3 644,525.5 652.1,508.5 657.6,520.7 670.4,503 673.8,515.8 683.1,500.4 691.5,514.3 699.1,501 711.7,506.9 719.5,492.4 723.1,505.1M416.2,589.1L423.7,579.6 433,585.2 441.5,570.4 452.3,582.9 460.8,568.7 463,577.6 479.2,560.7 482.6,575.8 491.6,562.5 501.4,568.5 511.5,558.5 514.2,569.3 521.6,552 533.1,562.3 539.1,547.3 549.1,562.8 563.1,544.2 565.9,556.4 579.5,539 583.1,551.4 595.8,535.7 604.2,550.2 607.5,535.1 616.8,542.2 630.1,525.4 636.7,537.5 644,525.5 647.4,539.5 657.6,520.7 667.7,534.2 673.8,515.8 684.4,530.7 691.5,514.3 701.7,522.1 711.7,506.9 714.7,521.5 723.1,505.1M416.2,589.1L425.8,603.8 433,585.2 438,599.2 452.3,582.9 457.1,594 463,577.6 472.1,589.1 482.6,575.8 492,588.4 501.4,568.5 505.4,582.6 514.2,569.3 528,580.2 533.1,562.3 539.7,572.3 549.1,562.8 562.8,572.1 565.9,556.4 575.8,563.4 583.1,551.4 596.3,560.7 604.2,550.2 612.9,558.2 616.8,542.2 629.1,551.6 636.7,537.5 645.6,548.1 647.4,539.5 659.2,548.7 667.7,534.2 679.5,539.9 684.4,530.7 691.2,538.5 701.7,522.1 710.6,533.9 714.7,521.5 724.1,529.9M416.2,617.8L425.8,603.8 433,611.9 438,599.2 452,604.4 457.1,594 469.5,600.8 472.1,589.1 484.3,599.8 492,588.4 501.3,594.4 505.4,582.6 516.4,592.5 528,580.2 533.3,589 539.7,572.3 550.2,583.7 562.8,572.1 563.5,581.7 575.8,563.4 584.2,574.6 596.3,560.7 603.3,573.3 612.9,558.2 617.6,566.4 629.1,551.6 634.5,562 645.6,548.1 648.4,560.7 659.2,548.7 664.9,556.9 679.5,539.9 685.3,549.8 691.2,538.5 703.1,545.8 710.6,533.9 720.8,545.8 724.1,529.9M416.2,617.8L424.6,625 433,611.9 441.4,621 452,604.4 458.2,617.1 469.5,600.8 475,613.2 484.3,599.8 491.8,609.2 501.3,594.4 508.7,605.3 516.4,592.5 525.5,601.3 533.3,589 542.3,597.4 550.2,583.7 559.1,593.5 563.5,581.7 575.9,589.5 584.2,574.6 592.7,585.6 603.3,573.3 609.5,581.7 617.6,566.4 626.3,577.7 634.5,562 643.2,573.8 648.4,560.7 660,569.8 664.9,556.9 676.8,565.9 685.3,549.8 693.6,562 703.1,545.8 710.4,558 720.8,545.8 727.2,554.1M416.2,642.9L424.6,625 433,639 441.4,621 449.8,635.1 458.2,617.1 466.6,631.1 475,613.2 483.4,627.2 491.8,609.2 500.2,623.2 508.7,605.3 517.1,619.3 525.5,601.3 533.9,615.4 542.3,597.4 550.7,611.4 559.1,593.5 567.5,607.5 575.9,589.5 584.3,603.6 592.7,585.6 601.1,599.6 609.5,581.7 617.9,595.7 626.3,577.7 634.8,591.8 643.2,573.8 651.6,587.8 660,569.8 668.4,583.9 676.8,565.9 685.2,579.9 693.6,562 702,576 710.4,558 718.8,572.1 727.2,554.1" stroke="#828288" stroke-width="1" stroke-opacity="0.72" fill="none" shape-rendering="crispEdges" clip-path="url(#cF)" mask="url(#mTun)"/><path d="M693.3,243.8L710.7,234.9 728.2,226 745.6,217.1 763.1,208.2 780.5,199.3 797.9,190.4 815.4,181.6 832.8,172.7 850.3,163.8 867.7,154.9 885.2,146M684.6,264.9L702,256 719.4,247.1 736.9,238.2 754.3,229.3 771.8,220.4 789.2,211.6 806.7,202.7 824.1,193.8 841.6,184.9 859,176 876.4,167.1M693.4,273.3L710.8,267.2 732.1,254.3 748.7,253 765.1,243.1 777.8,238 797.9,227.6 819,210.2 835.3,208.3 846.5,197.8 870,184.2 888.6,175.7M684.6,295.3L702,292.8 716.9,279.8 736.9,270 750.3,262.1 768.8,258.9 790.8,247.4 803.8,239.8 820.8,229.1 842.7,216.4 862.3,208.1 877.1,203.3M689.8,316.3L711.9,300.1 730.8,289.4 749.9,282.2 761.8,277.7 780,263.6 800.1,252.3 818.2,244.7 834,242.7 851,231.4 866.1,218.2 881.1,211.8M684.6,331L702,326 716.2,313.1 738.2,300.2 750,297 768.3,287.7 786.8,280.1 807.4,266.5 825.2,259.7 838.4,256.8 856.8,240.9 872.9,236.7M696.5,344.5L709.9,333.4 723.9,329.4 746.2,315.6 764.3,307.1 784.3,299.3 795.8,294.9 811.4,283.8 832,270.9 846.4,268.1 863.5,257.5 889,241.1M684.6,365.8L702,357.2 722.2,343 735.2,337.4 750.4,334.6 774.2,321 784.9,316.6 808.8,301.3 826.2,292.3 839.2,282.8 856.7,273.3 875,269.9M695,379.1L712.6,365.3 728.6,358.6 748.1,349.4 761,343.8 784.6,328.2 801.3,318 813.3,313.8 835,308.6 852.4,294.6 871,285.1 882.9,283.9M684.6,399.8L702,393.3 719.2,383.4 738.6,373.7 753.8,364.8 772.4,351.9 786.7,347.2 803,341.3 821,324.7 838.1,323.5 857.6,307 872.3,298.7M695,410.7L712.4,402.7 724.4,395.4 744.4,387 765.8,376.7 776.7,371 801.6,359 812,347.5 829.4,337.2 853.3,331.5 868.9,323.7 886.3,310.3M684.6,428.2L702,420.2 717.9,413.9 732.7,405 752.4,398.8 770.6,386.2 793.3,376.2 809.7,368.8 820,361.8 841,354.1 857.7,345.1 876.8,331.2M696.4,438.8L713.5,430.7 723.8,425.7 747.9,419.9 758.7,410.3 780.4,401.8 795.2,391.8 814.1,385 830.7,377.4 848.4,362.4 869.5,354 881.8,348.9M684.6,467.3L702,458.4 720.6,445.3 736,437.8 757.7,424.1 775.2,414.8 786.7,410.9 810.2,400.9 823.1,397.5 839.2,385.7 859.3,378 878.7,367.2M692,476.3L707.7,472.6 729.6,460.6 742.7,451.4 765.4,441 777.2,434 801.3,419.9 812.7,414.6 834.6,408 847.3,395.8 865.5,387.9 885.4,376.4M684.6,495.6L702,491.2 716,486.1 733.4,472.4 758.6,463 773.8,452.2 786.6,447.4 803.2,435.3 823.1,423.7 840.7,421.1 860.7,408.5 877.6,399.6M690.2,512.9L709.9,504 731.7,490.3 746.3,485.5 762.4,473 782.4,468.2 800.3,457.6 818.5,448.2 834.1,438.3 848.6,432.3 864.2,422.7 887.6,413.2M684.6,529.5L702,522.3 720.5,512.5 738.4,507.7 751.6,498.7 774.2,484.9 789.1,482.2 802.6,471.7 821.2,464.3 845.4,449.8 855.5,445.1 876.8,435.4M693.4,544.9L713.6,533.6 727.4,530.1 743.1,519.9 762.1,510.9 777.2,505 796.7,487.4 813.4,481.7 828.6,474.2 849.6,465.8 866.4,453.6 882.8,449.2M684.6,564.9L702,556 719.4,547.1 736.9,538.2 754.3,529.3 771.8,520.4 789.2,511.6 806.7,502.7 824.1,493.8 841.6,484.9 859,476 876.4,467.1M693.3,577.1L710.7,568.2 728.2,559.3 745.6,550.4 763.1,541.6 780.5,532.7 797.9,523.8 815.4,514.9 832.8,506 850.3,497.1 867.7,488.2 885.2,479.3M684.6,264.9L693.3,243.8 702,256 710.7,234.9 719.4,247.1 728.2,226 736.9,238.2 745.6,217.1 754.3,229.3 763.1,208.2 771.8,220.4 780.5,199.3 789.2,211.6 797.9,190.4 806.7,202.7 815.4,181.6 824.1,193.8 832.8,172.7 841.6,184.9 850.3,163.8 859,176 867.7,154.9 876.4,167.1 885.2,146M684.6,264.9L693.4,273.3 702,256 710.8,267.2 719.4,247.1 732.1,254.3 736.9,238.2 748.7,253 754.3,229.3 765.1,243.1 771.8,220.4 777.8,238 789.2,211.6 797.9,227.6 806.7,202.7 819,210.2 824.1,193.8 835.3,208.3 841.6,184.9 846.5,197.8 859,176 870,184.2 876.4,167.1 888.6,175.7M684.6,295.3L693.4,273.3 702,292.8 710.8,267.2 716.9,279.8 732.1,254.3 736.9,270 748.7,253 750.3,262.1 765.1,243.1 768.8,258.9 777.8,238 790.8,247.4 797.9,227.6 803.8,239.8 819,210.2 820.8,229.1 835.3,208.3 842.7,216.4 846.5,197.8 862.3,208.1 870,184.2 877.1,203.3 888.6,175.7M684.6,295.3L689.8,316.3 702,292.8 711.9,300.1 716.9,279.8 730.8,289.4 736.9,270 749.9,282.2 750.3,262.1 761.8,277.7 768.8,258.9 780,263.6 790.8,247.4 800.1,252.3 803.8,239.8 818.2,244.7 820.8,229.1 834,242.7 842.7,216.4 851,231.4 862.3,208.1 866.1,218.2 877.1,203.3 881.1,211.8M684.6,331L689.8,316.3 702,326 711.9,300.1 716.2,313.1 730.8,289.4 738.2,300.2 749.9,282.2 750,297 761.8,277.7 768.3,287.7 780,263.6 786.8,280.1 800.1,252.3 807.4,266.5 818.2,244.7 825.2,259.7 834,242.7 838.4,256.8 851,231.4 856.8,240.9 866.1,218.2 872.9,236.7 881.1,211.8M684.6,331L696.5,344.5 702,326 709.9,333.4 716.2,313.1 723.9,329.4 738.2,300.2 746.2,315.6 750,297 764.3,307.1 768.3,287.7 784.3,299.3 786.8,280.1 795.8,294.9 807.4,266.5 811.4,283.8 825.2,259.7 832,270.9 838.4,256.8 846.4,268.1 856.8,240.9 863.5,257.5 872.9,236.7 889,241.1M684.6,365.8L696.5,344.5 702,357.2 709.9,333.4 722.2,343 723.9,329.4 735.2,337.4 746.2,315.6 750.4,334.6 764.3,307.1 774.2,321 784.3,299.3 784.9,316.6 795.8,294.9 808.8,301.3 811.4,283.8 826.2,292.3 832,270.9 839.2,282.8 846.4,268.1 856.7,273.3 863.5,257.5 875,269.9 889,241.1M684.6,365.8L695,379.1 702,357.2 712.6,365.3 722.2,343 728.6,358.6 735.2,337.4 748.1,349.4 750.4,334.6 761,343.8 774.2,321 784.6,328.2 784.9,316.6 801.3,318 808.8,301.3 813.3,313.8 826.2,292.3 835,308.6 839.2,282.8 852.4,294.6 856.7,273.3 871,285.1 875,269.9 882.9,283.9M684.6,399.8L695,379.1 702,393.3 712.6,365.3 719.2,383.4 728.6,358.6 738.6,373.7 748.1,349.4 753.8,364.8 761,343.8 772.4,351.9 784.6,328.2 786.7,347.2 801.3,318 803,341.3 813.3,313.8 821,324.7 835,308.6 838.1,323.5 852.4,294.6 857.6,307 871,285.1 872.3,298.7 882.9,283.9M684.6,399.8L695,410.7 702,393.3 712.4,402.7 719.2,383.4 724.4,395.4 738.6,373.7 744.4,387 753.8,364.8 765.8,376.7 772.4,351.9 776.7,371 786.7,347.2 801.6,359 803,341.3 812,347.5 821,324.7 829.4,337.2 838.1,323.5 853.3,331.5 857.6,307 868.9,323.7 872.3,298.7 886.3,310.3M684.6,428.2L695,410.7 702,420.2 712.4,402.7 717.9,413.9 724.4,395.4 732.7,405 744.4,387 752.4,398.8 765.8,376.7 770.6,386.2 776.7,371 793.3,376.2 801.6,359 809.7,368.8 812,347.5 820,361.8 829.4,337.2 841,354.1 853.3,331.5 857.7,345.1 868.9,323.7 876.8,331.2 886.3,310.3M684.6,428.2L696.4,438.8 702,420.2 713.5,430.7 717.9,413.9 723.8,425.7 732.7,405 747.9,419.9 752.4,398.8 758.7,410.3 770.6,386.2 780.4,401.8 793.3,376.2 795.2,391.8 809.7,368.8 814.1,385 820,361.8 830.7,377.4 841,354.1 848.4,362.4 857.7,345.1 869.5,354 876.8,331.2 881.8,348.9M684.6,467.3L696.4,438.8 702,458.4 713.5,430.7 720.6,445.3 723.8,425.7 736,437.8 747.9,419.9 757.7,424.1 758.7,410.3 775.2,414.8 780.4,401.8 786.7,410.9 795.2,391.8 810.2,400.9 814.1,385 823.1,397.5 830.7,377.4 839.2,385.7 848.4,362.4 859.3,378 869.5,354 878.7,367.2 881.8,348.9M684.6,467.3L692,476.3 702,458.4 707.7,472.6 720.6,445.3 729.6,460.6 736,437.8 742.7,451.4 757.7,424.1 765.4,441 775.2,414.8 777.2,434 786.7,410.9 801.3,419.9 810.2,400.9 812.7,414.6 823.1,397.5 834.6,408 839.2,385.7 847.3,395.8 859.3,378 865.5,387.9 878.7,367.2 885.4,376.4M684.6,495.6L692,476.3 702,491.2 707.7,472.6 716,486.1 729.6,460.6 733.4,472.4 742.7,451.4 758.6,463 765.4,441 773.8,452.2 777.2,434 786.6,447.4 801.3,419.9 803.2,435.3 812.7,414.6 823.1,423.7 834.6,408 840.7,421.1 847.3,395.8 860.7,408.5 865.5,387.9 877.6,399.6 885.4,376.4M684.6,495.6L690.2,512.9 702,491.2 709.9,504 716,486.1 731.7,490.3 733.4,472.4 746.3,485.5 758.6,463 762.4,473 773.8,452.2 782.4,468.2 786.6,447.4 800.3,457.6 803.2,435.3 818.5,448.2 823.1,423.7 834.1,438.3 840.7,421.1 848.6,432.3 860.7,408.5 864.2,422.7 877.6,399.6 887.6,413.2M684.6,529.5L690.2,512.9 702,522.3 709.9,504 720.5,512.5 731.7,490.3 738.4,507.7 746.3,485.5 751.6,498.7 762.4,473 774.2,484.9 782.4,468.2 789.1,482.2 800.3,457.6 802.6,471.7 818.5,448.2 821.2,464.3 834.1,438.3 845.4,449.8 848.6,432.3 855.5,445.1 864.2,422.7 876.8,435.4 887.6,413.2M684.6,529.5L693.4,544.9 702,522.3 713.6,533.6 720.5,512.5 727.4,530.1 738.4,507.7 743.1,519.9 751.6,498.7 762.1,510.9 774.2,484.9 777.2,505 789.1,482.2 796.7,487.4 802.6,471.7 813.4,481.7 821.2,464.3 828.6,474.2 845.4,449.8 849.6,465.8 855.5,445.1 866.4,453.6 876.8,435.4 882.8,449.2M684.6,564.9L693.4,544.9 702,556 713.6,533.6 719.4,547.1 727.4,530.1 736.9,538.2 743.1,519.9 754.3,529.3 762.1,510.9 771.8,520.4 777.2,505 789.2,511.6 796.7,487.4 806.7,502.7 813.4,481.7 824.1,493.8 828.6,474.2 841.6,484.9 849.6,465.8 859,476 866.4,453.6 876.4,467.1 882.8,449.2M684.6,564.9L693.3,577.1 702,556 710.7,568.2 719.4,547.1 728.2,559.3 736.9,538.2 745.6,550.4 754.3,529.3 763.1,541.6 771.8,520.4 780.5,532.7 789.2,511.6 797.9,523.8 806.7,502.7 815.4,514.9 824.1,493.8 832.8,506 841.6,484.9 850.3,497.1 859,476 867.7,488.2 876.4,467.1 885.2,479.3" stroke="#828288" stroke-width="1" stroke-opacity="0.72" fill="none" shape-rendering="crispEdges" clip-path="url(#cR)" mask="url(#mTun)"/><path d="M433,319 L433,623 M702,256 L699,555 M859,176 L861,478" stroke="#8a8a8a" stroke-width="1" fill="none"/><path d="M296,213 L764,92 L859,147 M296,213 L296,242 M764,92 L764,121 M859,147 L859,176 M296,213 L330,233" stroke="#7a7a7a" stroke-width="1" fill="none"/><g clip-path="url(#cF)"><path d="M625.8,347.5L634.2,345.6 642.5,343.7 650.8,341.8 659.2,339.9 667.5,338 675.8,336.1 684.2,334.3 692.5,332.4 700.8,330.5 709.2,328.6 717.5,326.7M621.7,356.9L630,355 638.3,353.1 646.7,351.2 655,349.3 663.3,347.4 671.7,345.6 680,343.7 688.3,341.8 696.7,339.9 705,338 713.3,336.1M628,364L632.8,364.4 642,359.3 649,360.6 660.7,357.2 667.3,355.3 674.5,355.7 683.4,352.1 694.1,350.5 700.7,346.4 709.4,343.6 719.2,342.5M621.7,372.6L630,370.7 638,368.5 644.2,369.8 653.9,365.2 662.3,364.5 671.3,363.3 680.8,359.7 690.5,360 694.5,359 707,355.9 711.5,355.1M626.5,378.7L631.7,382.3 643.3,376.1 648.8,374.3 657.8,375.5 666.7,370.3 677.9,371 682.5,370.5 693,367.5 701.7,366.1 710.6,363.8 716,361.9M621.7,392L630,390.8 638.6,385.7 645.3,383.5 655,380.9 663.2,379.5 671.6,379.4 680.2,379.3 685.9,377.9 696.5,374.1 705.8,373.4 712.7,369.7M628.1,395.6L634.9,396.9 640.1,395.6 651.7,394.6 658.3,393.3 667.6,388.7 677.8,384.1 685.3,385.4 691.7,385.2 700.2,381.3 709.3,380.7 716.1,377.5M621.7,407.9L630,404.7 640,403 646.7,400.8 655,402.5 664.1,399.5 670.8,395.6 679,395.1 689,393.8 694.4,392.3 706.9,388.6 711.1,386.4M623.4,414.2L636.3,413.4 643.3,412.7 652.9,409.6 659.8,408.1 668.5,406 676.7,402.2 685,401.5 693.8,397.7 699.2,396.2 710.5,398.1 718.3,393.6M621.7,426L630,421.5 637.3,420.6 645.8,418.8 655.7,419.1 661.1,416 669.4,411.8 681.6,411.4 690.4,408.7 694.2,407.6 705.5,407.8 715.7,403.1M625.4,430.2L634.9,428.6 640.8,426.3 648.4,427.9 657.3,427.3 665.4,425 674,418.7 685.3,417.3 693.7,415.1 698.6,417 710.2,414.8 718.6,408.9M621.7,442.6L630,441.8 637.1,440.4 647.8,433.1 652.6,435.3 664.9,429.6 670.7,431.5 678.3,430.5 688.3,424.2 696,425 704.7,423.6 711.6,422.6M625.1,449.9L634.8,446.6 641.9,446.8 653.1,444.3 659.5,440.3 665.3,442.5 676.8,439.1 683.3,436.5 694.9,435.1 701.3,430.9 708.8,432.2 716.9,429.3M621.7,460.4L630,455.4 635.8,454 646.3,453.3 656.6,452.5 661,451.2 673.2,448.6 680.4,444 690.1,444.5 697.6,443.3 704.2,437.6 713.6,439.1M625.8,465.9L634.2,464.1 642.5,462.2 650.8,460.3 659.2,458.4 667.5,456.5 675.8,454.6 684.2,452.7 692.5,450.8 700.8,448.9 709.2,447.1 717.5,445.2M621.7,475.4L630,473.5 638.3,471.6 646.7,469.7 655,467.8 663.3,465.9 671.7,464 680,462.1 688.3,460.2 696.7,458.4 705,456.5 713.3,454.6M621.7,356.9L625.8,347.5 630,355 634.2,345.6 638.3,353.1 642.5,343.7 646.7,351.2 650.8,341.8 655,349.3 659.2,339.9 663.3,347.4 667.5,338 671.7,345.6 675.8,336.1 680,343.7 684.2,334.3 688.3,341.8 692.5,332.4 696.7,339.9 700.8,330.5 705,338 709.2,328.6 713.3,336.1 717.5,326.7M621.7,356.9L628,364 630,355 632.8,364.4 638.3,353.1 642,359.3 646.7,351.2 649,360.6 655,349.3 660.7,357.2 663.3,347.4 667.3,355.3 671.7,345.6 674.5,355.7 680,343.7 683.4,352.1 688.3,341.8 694.1,350.5 696.7,339.9 700.7,346.4 705,338 709.4,343.6 713.3,336.1 719.2,342.5M621.7,372.6L628,364 630,370.7 632.8,364.4 638,368.5 642,359.3 644.2,369.8 649,360.6 653.9,365.2 660.7,357.2 662.3,364.5 667.3,355.3 671.3,363.3 674.5,355.7 680.8,359.7 683.4,352.1 690.5,360 694.1,350.5 694.5,359 700.7,346.4 707,355.9 709.4,343.6 711.5,355.1 719.2,342.5M621.7,372.6L626.5,378.7 630,370.7 631.7,382.3 638,368.5 643.3,376.1 644.2,369.8 648.8,374.3 653.9,365.2 657.8,375.5 662.3,364.5 666.7,370.3 671.3,363.3 677.9,371 680.8,359.7 682.5,370.5 690.5,360 693,367.5 694.5,359 701.7,366.1 707,355.9 710.6,363.8 711.5,355.1 716,361.9M621.7,392L626.5,378.7 630,390.8 631.7,382.3 638.6,385.7 643.3,376.1 645.3,383.5 648.8,374.3 655,380.9 657.8,375.5 663.2,379.5 666.7,370.3 671.6,379.4 677.9,371 680.2,379.3 682.5,370.5 685.9,377.9 693,367.5 696.5,374.1 701.7,366.1 705.8,373.4 710.6,363.8 712.7,369.7 716,361.9M621.7,392L628.1,395.6 630,390.8 634.9,396.9 638.6,385.7 640.1,395.6 645.3,383.5 651.7,394.6 655,380.9 658.3,393.3 663.2,379.5 667.6,388.7 671.6,379.4 677.8,384.1 680.2,379.3 685.3,385.4 685.9,377.9 691.7,385.2 696.5,374.1 700.2,381.3 705.8,373.4 709.3,380.7 712.7,369.7 716.1,377.5M621.7,407.9L628.1,395.6 630,404.7 634.9,396.9 640,403 640.1,395.6 646.7,400.8 651.7,394.6 655,402.5 658.3,393.3 664.1,399.5 667.6,388.7 670.8,395.6 677.8,384.1 679,395.1 685.3,385.4 689,393.8 691.7,385.2 694.4,392.3 700.2,381.3 706.9,388.6 709.3,380.7 711.1,386.4 716.1,377.5M621.7,407.9L623.4,414.2 630,404.7 636.3,413.4 640,403 643.3,412.7 646.7,400.8 652.9,409.6 655,402.5 659.8,408.1 664.1,399.5 668.5,406 670.8,395.6 676.7,402.2 679,395.1 685,401.5 689,393.8 693.8,397.7 694.4,392.3 699.2,396.2 706.9,388.6 710.5,398.1 711.1,386.4 718.3,393.6M621.7,426L623.4,414.2 630,421.5 636.3,413.4 637.3,420.6 643.3,412.7 645.8,418.8 652.9,409.6 655.7,419.1 659.8,408.1 661.1,416 668.5,406 669.4,411.8 676.7,402.2 681.6,411.4 685,401.5 690.4,408.7 693.8,397.7 694.2,407.6 699.2,396.2 705.5,407.8 710.5,398.1 715.7,403.1 718.3,393.6M621.7,426L625.4,430.2 630,421.5 634.9,428.6 637.3,420.6 640.8,426.3 645.8,418.8 648.4,427.9 655.7,419.1 657.3,427.3 661.1,416 665.4,425 669.4,411.8 674,418.7 681.6,411.4 685.3,417.3 690.4,408.7 693.7,415.1 694.2,407.6 698.6,417 705.5,407.8 710.2,414.8 715.7,403.1 718.6,408.9M621.7,442.6L625.4,430.2 630,441.8 634.9,428.6 637.1,440.4 640.8,426.3 647.8,433.1 648.4,427.9 652.6,435.3 657.3,427.3 664.9,429.6 665.4,425 670.7,431.5 674,418.7 678.3,430.5 685.3,417.3 688.3,424.2 693.7,415.1 696,425 698.6,417 704.7,423.6 710.2,414.8 711.6,422.6 718.6,408.9M621.7,442.6L625.1,449.9 630,441.8 634.8,446.6 637.1,440.4 641.9,446.8 647.8,433.1 653.1,444.3 652.6,435.3 659.5,440.3 664.9,429.6 665.3,442.5 670.7,431.5 676.8,439.1 678.3,430.5 683.3,436.5 688.3,424.2 694.9,435.1 696,425 701.3,430.9 704.7,423.6 708.8,432.2 711.6,422.6 716.9,429.3M621.7,460.4L625.1,449.9 630,455.4 634.8,446.6 635.8,454 641.9,446.8 646.3,453.3 653.1,444.3 656.6,452.5 659.5,440.3 661,451.2 665.3,442.5 673.2,448.6 676.8,439.1 680.4,444 683.3,436.5 690.1,444.5 694.9,435.1 697.6,443.3 701.3,430.9 704.2,437.6 708.8,432.2 713.6,439.1 716.9,429.3M621.7,460.4L625.8,465.9 630,455.4 634.2,464.1 635.8,454 642.5,462.2 646.3,453.3 650.8,460.3 656.6,452.5 659.2,458.4 661,451.2 667.5,456.5 673.2,448.6 675.8,454.6 680.4,444 684.2,452.7 690.1,444.5 692.5,450.8 697.6,443.3 700.8,448.9 704.2,437.6 709.2,447.1 713.6,439.1 717.5,445.2M621.7,475.4L625.8,465.9 630,473.5 634.2,464.1 638.3,471.6 642.5,462.2 646.7,469.7 650.8,460.3 655,467.8 659.2,458.4 663.3,465.9 667.5,456.5 671.7,464 675.8,454.6 680,462.1 684.2,452.7 688.3,460.2 692.5,450.8 696.7,458.4 700.8,448.9 705,456.5 709.2,447.1 713.3,454.6 717.5,445.2" stroke="#828288" stroke-width="1" stroke-opacity="0.72" fill="none" shape-rendering="crispEdges" clip-path="url(#cTun)"/></g><g clip-path="url(#cR)"><path d="M697.8,323.2L706.2,319 714.5,314.7 722.8,310.5 731.2,306.3 739.5,302.1 747.8,297.8 756.2,293.6 764.5,289.4 772.8,285.2 781.2,281 789.5,276.7M693.7,334.2L702,330 710.3,325.8 718.7,321.6 727,317.3 735.3,313.1 743.7,308.9 752,304.7 760.3,300.4 768.7,296.2 777,292 785.3,287.8M696.3,343.1L708.3,334.3 715,333.3 722.7,326.9 729.9,326.1 741,319 745.8,318.4 757.5,309.4 764.9,309.2 774.8,302.2 781,299.4 787.9,293.7M693.7,353.2L702,348.2 709.8,344 716.9,337.9 729.5,333.3 733.4,332.7 745.1,324.2 752.5,321.4 760.4,315.7 766.3,317.9 778.8,308.9 785.7,304.2M699.2,357.8L708.4,355 716.1,352.1 721.6,344.4 729.7,341.1 737.4,336.4 748.1,335.4 756,331.8 766.5,321.7 773.3,320.1 779.3,320.1 788.3,313.4M693.7,372.4L702,365.1 710.1,359.8 721,358.7 725.6,351.3 734.1,348.7 745.7,345.8 753.7,337.1 761.8,336.6 769.4,334.2 774.8,326.9 786.6,325.2M698.7,375.2L706.6,373.7 712.5,368.4 721.6,362.7 731.1,358.1 738.2,354.4 748.7,348.4 757.3,345 762.2,346.4 771.4,341.8 783,335.7 787.7,330.9M693.7,390.1L702,384.3 710.1,378.6 720.3,374.2 727.6,368.7 733.9,365 744.7,362.2 750.2,361.1 759.2,354.1 766.9,349.4 778.7,343.8 783.7,342.1M696.9,397.2L704.2,393.9 712.3,389.4 723.7,380 731.1,376.6 738.3,372.5 747.2,372.3 758.7,366.1 762.5,360.7 774.8,353.2 782.3,350.7 791.9,344.4M693.7,404.8L702,398.8 712,396.5 717.1,393.4 729.1,386.2 735.7,382.4 742.1,382.6 753.1,373.9 758.2,370.7 769.2,367.4 775.9,362.4 785.9,360M699.4,412.1L704.7,406.7 715.7,402.9 723.9,396.9 732.7,393.9 741.2,392.4 747.8,384.6 758.2,381.7 766.4,376.5 771.3,377 780.5,368.8 788.9,366.9M693.7,423.6L702,419.4 708.4,417.2 720.2,412 726.1,408.2 734.7,404 741.5,401.3 754.3,392.8 760.4,389.9 768.9,382.8 779.3,378.6 783.7,375.7M696.6,432.7L703.8,425.1 715.5,419.7 720.4,419.4 731.5,413.4 740.5,406.6 749.7,405.2 753.9,399.9 764.5,396.6 771.7,390.9 780.7,386.4 790,385.6M693.7,441.8L702,435.3 712,434.4 718.1,428.6 728.7,423.8 734.8,422.9 745.1,414.5 750.7,411.6 760,410.3 770.2,404.8 778.6,400.2 783.1,396.1M700.1,449.3L704.9,444.2 715.2,438.7 723,433.1 730.8,431.5 737.1,426.4 750.2,423.1 758.4,418.2 766,415.7 774.8,406.7 781.9,404.3 790.4,400.1M693.7,459.2L702,455 710.3,450.8 718.7,446.6 727,442.3 735.3,438.1 743.7,433.9 752,429.7 760.3,425.4 768.7,421.2 777,417 785.3,412.8M697.8,466L706.2,461.8 714.5,457.6 722.8,453.4 731.2,449.2 739.5,444.9 747.8,440.7 756.2,436.5 764.5,432.3 772.8,428 781.2,423.8 789.5,419.6M693.7,334.2L697.8,323.2 702,330 706.2,319 710.3,325.8 714.5,314.7 718.7,321.6 722.8,310.5 727,317.3 731.2,306.3 735.3,313.1 739.5,302.1 743.7,308.9 747.8,297.8 752,304.7 756.2,293.6 760.3,300.4 764.5,289.4 768.7,296.2 772.8,285.2 777,292 781.2,281 785.3,287.8 789.5,276.7M693.7,334.2L696.3,343.1 702,330 708.3,334.3 710.3,325.8 715,333.3 718.7,321.6 722.7,326.9 727,317.3 729.9,326.1 735.3,313.1 741,319 743.7,308.9 745.8,318.4 752,304.7 757.5,309.4 760.3,300.4 764.9,309.2 768.7,296.2 774.8,302.2 777,292 781,299.4 785.3,287.8 787.9,293.7M693.7,353.2L696.3,343.1 702,348.2 708.3,334.3 709.8,344 715,333.3 716.9,337.9 722.7,326.9 729.5,333.3 729.9,326.1 733.4,332.7 741,319 745.1,324.2 745.8,318.4 752.5,321.4 757.5,309.4 760.4,315.7 764.9,309.2 766.3,317.9 774.8,302.2 778.8,308.9 781,299.4 785.7,304.2 787.9,293.7M693.7,353.2L699.2,357.8 702,348.2 708.4,355 709.8,344 716.1,352.1 716.9,337.9 721.6,344.4 729.5,333.3 729.7,341.1 733.4,332.7 737.4,336.4 745.1,324.2 748.1,335.4 752.5,321.4 756,331.8 760.4,315.7 766.5,321.7 766.3,317.9 773.3,320.1 778.8,308.9 779.3,320.1 785.7,304.2 788.3,313.4M693.7,372.4L699.2,357.8 702,365.1 708.4,355 710.1,359.8 716.1,352.1 721,358.7 721.6,344.4 725.6,351.3 729.7,341.1 734.1,348.7 737.4,336.4 745.7,345.8 748.1,335.4 753.7,337.1 756,331.8 761.8,336.6 766.5,321.7 769.4,334.2 773.3,320.1 774.8,326.9 779.3,320.1 786.6,325.2 788.3,313.4M693.7,372.4L698.7,375.2 702,365.1 706.6,373.7 710.1,359.8 712.5,368.4 721,358.7 721.6,362.7 725.6,351.3 731.1,358.1 734.1,348.7 738.2,354.4 745.7,345.8 748.7,348.4 753.7,337.1 757.3,345 761.8,336.6 762.2,346.4 769.4,334.2 771.4,341.8 774.8,326.9 783,335.7 786.6,325.2 787.7,330.9M693.7,390.1L698.7,375.2 702,384.3 706.6,373.7 710.1,378.6 712.5,368.4 720.3,374.2 721.6,362.7 727.6,368.7 731.1,358.1 733.9,365 738.2,354.4 744.7,362.2 748.7,348.4 750.2,361.1 757.3,345 759.2,354.1 762.2,346.4 766.9,349.4 771.4,341.8 778.7,343.8 783,335.7 783.7,342.1 787.7,330.9M693.7,390.1L696.9,397.2 702,384.3 704.2,393.9 710.1,378.6 712.3,389.4 720.3,374.2 723.7,380 727.6,368.7 731.1,376.6 733.9,365 738.3,372.5 744.7,362.2 747.2,372.3 750.2,361.1 758.7,366.1 759.2,354.1 762.5,360.7 766.9,349.4 774.8,353.2 778.7,343.8 782.3,350.7 783.7,342.1 791.9,344.4M693.7,404.8L696.9,397.2 702,398.8 704.2,393.9 712,396.5 712.3,389.4 717.1,393.4 723.7,380 729.1,386.2 731.1,376.6 735.7,382.4 738.3,372.5 742.1,382.6 747.2,372.3 753.1,373.9 758.7,366.1 758.2,370.7 762.5,360.7 769.2,367.4 774.8,353.2 775.9,362.4 782.3,350.7 785.9,360 791.9,344.4M693.7,404.8L699.4,412.1 702,398.8 704.7,406.7 712,396.5 715.7,402.9 717.1,393.4 723.9,396.9 729.1,386.2 732.7,393.9 735.7,382.4 741.2,392.4 742.1,382.6 747.8,384.6 753.1,373.9 758.2,381.7 758.2,370.7 766.4,376.5 769.2,367.4 771.3,377 775.9,362.4 780.5,368.8 785.9,360 788.9,366.9M693.7,423.6L699.4,412.1 702,419.4 704.7,406.7 708.4,417.2 715.7,402.9 720.2,412 723.9,396.9 726.1,408.2 732.7,393.9 734.7,404 741.2,392.4 741.5,401.3 747.8,384.6 754.3,392.8 758.2,381.7 760.4,389.9 766.4,376.5 768.9,382.8 771.3,377 779.3,378.6 780.5,368.8 783.7,375.7 788.9,366.9M693.7,423.6L696.6,432.7 702,419.4 703.8,425.1 708.4,417.2 715.5,419.7 720.2,412 720.4,419.4 726.1,408.2 731.5,413.4 734.7,404 740.5,406.6 741.5,401.3 749.7,405.2 754.3,392.8 753.9,399.9 760.4,389.9 764.5,396.6 768.9,382.8 771.7,390.9 779.3,378.6 780.7,386.4 783.7,375.7 790,385.6M693.7,441.8L696.6,432.7 702,435.3 703.8,425.1 712,434.4 715.5,419.7 718.1,428.6 720.4,419.4 728.7,423.8 731.5,413.4 734.8,422.9 740.5,406.6 745.1,414.5 749.7,405.2 750.7,411.6 753.9,399.9 760,410.3 764.5,396.6 770.2,404.8 771.7,390.9 778.6,400.2 780.7,386.4 783.1,396.1 790,385.6M693.7,441.8L700.1,449.3 702,435.3 704.9,444.2 712,434.4 715.2,438.7 718.1,428.6 723,433.1 728.7,423.8 730.8,431.5 734.8,422.9 737.1,426.4 745.1,414.5 750.2,423.1 750.7,411.6 758.4,418.2 760,410.3 766,415.7 770.2,404.8 774.8,406.7 778.6,400.2 781.9,404.3 783.1,396.1 790.4,400.1M693.7,459.2L700.1,449.3 702,455 704.9,444.2 710.3,450.8 715.2,438.7 718.7,446.6 723,433.1 727,442.3 730.8,431.5 735.3,438.1 737.1,426.4 743.7,433.9 750.2,423.1 752,429.7 758.4,418.2 760.3,425.4 766,415.7 768.7,421.2 774.8,406.7 777,417 781.9,404.3 785.3,412.8 790.4,400.1M693.7,459.2L697.8,466 702,455 706.2,461.8 710.3,450.8 714.5,457.6 718.7,446.6 722.8,453.4 727,442.3 731.2,449.2 735.3,438.1 739.5,444.9 743.7,433.9 747.8,440.7 752,429.7 756.2,436.5 760.3,425.4 764.5,432.3 768.7,421.2 772.8,428 777,417 781.2,423.8 785.3,412.8 789.5,419.6" stroke="#828288" stroke-width="1" stroke-opacity="0.72" fill="none" shape-rendering="crispEdges" clip-path="url(#cTun)"/></g><g transform="rotate(-30 671 414)"><ellipse cx="671" cy="414" rx="12" ry="8" fill="#50a040" opacity="0.8"/><path d="M660 410.5h22M659 414h24M660 417.5h22" stroke="#3a5030" stroke-width="1.3"/><path d="M661 408h20M661 420h20" stroke="#80e060" stroke-width="1"/></g><g transform="rotate(-30 731 393)"><ellipse cx="731" cy="393" rx="11" ry="8" fill="#60b040" opacity="0.8"/><path d="M721 390h20M720 393.5h22M721 397h20" stroke="#90f070" stroke-width="1.2"/><path d="M722 399.5h18" stroke="#404838" stroke-width="1"/></g><path d="M702 372 Q730 360 745 378 Q760 398 800 382" stroke="#50f040" stroke-width="1" fill="none"/></svg>
<div class="a" style="left:980px;top:82px;width:16px;height:583px;background:linear-gradient(90deg,#a8acb4 0,#d8dce0 3px,#d0d4d8 12px,#b0b4b8 16px)"></div>
<div class="a" style="left:979px;top:82px;width:1px;height:583px;background:#5a5a5a"></div>
<svg class="a" style="left:980px;top:82px" width="16" height="583" viewBox="980 82 16 583"><rect x="983" y="87.9" width="10" height="9" fill="#7c7c7c"/><rect x="981.5" y="100.9" width="12" height="12" fill="#fff0c0" stroke="#f0a040" stroke-width="1"/><rect x="983" y="102.4" width="10" height="9" fill="#ff8a10"/><rect x="983" y="117.0" width="10" height="9" fill="#10e8e0"/><rect x="983" y="131.5" width="10" height="9" fill="#10e010"/><rect x="983" y="146.0" width="10" height="9" fill="#ffff00"/><rect x="983" y="160.6" width="10" height="9" fill="#f8dca0"/><rect x="983" y="175.1" width="10" height="9" fill="#c4c4c4"/><rect x="983" y="189.6" width="10" height="9" fill="#0a0a20"/><rect x="983" y="204.1" width="10" height="9" fill="#ffffff"/><rect x="983" y="218.7" width="10" height="9" fill="#e02010"/><rect x="983" y="233.2" width="10" height="9" fill="#e04010"/><rect x="983" y="247.7" width="10" height="9" fill="#ff6a10"/><rect x="983" y="262.3" width="10" height="9" fill="#ffc010"/><rect x="983" y="276.8" width="10" height="9" fill="#20c020"/><rect x="983" y="291.3" width="10" height="9" fill="#30c020"/><rect x="983" y="305.9" width="10" height="9" fill="#60c020"/><rect x="983" y="320.4" width="10" height="9" fill="#98c820"/><rect x="983" y="334.9" width="10" height="9" fill="#1020e0"/><rect x="983" y="349.4" width="10" height="9" fill="#1020e0"/><rect x="983" y="364.0" width="10" height="9" fill="#2068e0"/><rect x="983" y="378.5" width="10" height="9" fill="#20c8e8"/><rect x="983" y="393.0" width="10" height="9" fill="#e01810"/><rect x="983" y="407.6" width="10" height="9" fill="#d84010"/><rect x="983" y="422.1" width="10" height="9" fill="#e07010"/><rect x="983" y="436.6" width="10" height="9" fill="#e0a010"/><rect x="983" y="451.1" width="10" height="9" fill="#10a020"/><rect x="983" y="465.7" width="10" height="9" fill="#20a020"/><rect x="983" y="480.2" width="10" height="9" fill="#40a020"/><rect x="983" y="494.7" width="10" height="9" fill="#80a818"/><rect x="983" y="509.3" width="10" height="9" fill="#1030d8"/><rect x="983" y="523.8" width="10" height="9" fill="#2070e0"/><rect x="983" y="538.3" width="10" height="9" fill="#20a0e0"/><rect x="983" y="552.9" width="10" height="9" fill="#10d0e0"/><rect x="983" y="567.4" width="10" height="9" fill="#582820"/><rect x="983" y="581.9" width="10" height="9" fill="#343434"/><rect x="983" y="596.4" width="10" height="9" fill="#106810"/><rect x="983" y="611.0" width="10" height="9" fill="#108810"/><rect x="983" y="625.5" width="10" height="9" fill="#908810"/><rect x="983" y="640.0" width="10" height="9" fill="#a0e020"/><rect x="981" y="654.5" width="14" height="9.5" fill="#6a7078"/><path d="M985 656.5l3 2 3-2M985 660l3 2 3-2" stroke="#f0f0f0" stroke-width="1" fill="none"/></svg>
<div class="a" style="left:903px;top:83px;width:74px;height:291px;background:#fff;border-left:1px solid #b0b0b0;border-bottom:1px solid #b0b0b0;box-shadow:0 1px 1px #ddd"></div>
<div class="a lg" style="left:907px;top:102px">@w_Legend[mm]</div>
<div class="a" style="left:907px;top:137.9px;width:16px;height:9px;background:#d42008;border:1px solid rgba(0,0,0,0.15)"></div>
<div class="a lg" style="left:927px;top:133.4px">0.000</div>
<div class="a" style="left:907px;top:161.5px;width:16px;height:9px;background:#ff6010;border:1px solid rgba(0,0,0,0.15)"></div>
<div class="a lg" style="left:927px;top:157.0px">-31.001</div>
<div class="a" style="left:907px;top:185.1px;width:16px;height:9px;background:#ffe010;border:1px solid rgba(0,0,0,0.15)"></div>
<div class="a lg" style="left:927px;top:180.6px">-62.002</div>
<div class="a" style="left:907px;top:208.7px;width:16px;height:9px;background:#b0f010;border:1px solid rgba(0,0,0,0.15)"></div>
<div class="a lg" style="left:927px;top:204.2px">-93.004</div>
<div class="a" style="left:907px;top:232.3px;width:16px;height:9px;background:#40e010;border:1px solid rgba(0,0,0,0.15)"></div>
<div class="a lg" style="left:927px;top:227.8px">-124.005</div>
<div class="a" style="left:907px;top:255.9px;width:16px;height:9px;background:#20d840;border:1px solid rgba(0,0,0,0.15)"></div>
<div class="a lg" style="left:927px;top:251.4px">-155.006</div>
<div class="a" style="left:907px;top:279.5px;width:16px;height:9px;background:#30f0c0;border:1px solid rgba(0,0,0,0.15)"></div>
<div class="a lg" style="left:927px;top:275.0px">-186.007</div>
<div class="a" style="left:907px;top:303.1px;width:16px;height:9px;background:#10e0e0;border:1px solid rgba(0,0,0,0.15)"></div>
<div class="a lg" style="left:927px;top:298.6px">-217.008</div>
<div class="a" style="left:907px;top:326.7px;width:16px;height:9px;background:#1060f0;border:1px solid rgba(0,0,0,0.15)"></div>
<div class="a lg" style="left:927px;top:322.2px">-248.010</div>
<div class="a" style="left:907px;top:350.3px;width:16px;height:9px;background:#0818e0;border:1px solid rgba(0,0,0,0.15)"></div>
<div class="a lg" style="left:927px;top:345.8px">-279.011</div>
<div class="a" style="left:288px;top:627.5px;font-size:8px;font-weight:bold;color:#222;white-space:nowrap;transform-origin:0 50%;transform:scaleX(0.974)">bh:=284.811mm&nbsp; Z displacement=-279.011mm</div>
<svg class="a" style="left:850px;top:535px" width="100" height="100" viewBox="850 535 100 100">
<path d="M903.7 605V566" stroke="#3050e0" stroke-width="1"/><path d="M898 569l5.7-16 5.7 16q-5.7 2-11.4 0z" fill="#1a30c0"/><text x="902" y="552" font-size="7" fill="#2a50e0" font-family="Liberation Sans">Z</text>
<path d="M903.7 605L870 614" stroke="#e03020" stroke-width="1"/><path d="M872 609.5l-15 8 16 1.5q2-5-1-9.5z" fill="#d81a10"/><text x="855" y="614" font-size="5" fill="#999" font-family="Liberation Sans">x</text>
<path d="M903.7 605L882 593" stroke="#707070" stroke-width="1"/><path d="M872 587l13 2 -3 8q-5 0-10-10z" fill="#606060"/><text x="872" y="586" font-size="5" fill="#aaa" font-family="Liberation Sans">y</text>
</svg>
<div class="a" style="left:0;top:664px;width:1000px;height:27px;background:#3e3e3e"></div><div class="a" style="left:4px;top:662px;width:992px;height:3px;background:#e4e8ea"></div><div class="a" style="left:0;top:690px;width:1000px;height:1px;background:#9a9a9a"></div><div class="a" style="left:0;top:0;width:1px;height:691px;background:#9a9a9a"></div><div class="a" style="left:999px;top:0;width:1px;height:691px;background:#8a8a8a"></div>
<div class="a" style="left:4px;top:665px;width:992px;height:22px;background:linear-gradient(#f4f6f8 0,#dfe3e6 3px,#c8c8d4 8px,#d8dbe0 15px,#e6eaec 23px)"></div>
<div class="a" style="left:7px;top:669px;font-size:10px;color:#111;white-space:nowrap;transform:scaleX(0.73);transform-origin:0 50%">コンタ図表示オプション</div>
<div class="a sg" style="left:293px;width:148px"></div>
<div class="a sg" style="left:444px;width:47px"></div>
<div class="a sg" style="left:494px;width:100px"></div>
<div class="a sg" style="left:597px;width:100px"></div>
<div class="a sg" style="left:700px;width:47px"></div>
<div class="a sg" style="left:749px;width:67px"></div>
<div class="a sg" style="left:818px;width:166px"></div>
<div class="a sg" style="left:984px;width:12px"></div>
<div class="a" style="left:832px;top:670px;font-size:11px;color:#2a2a7a;white-space:nowrap;transform:scaleX(0.9);transform-origin:0 50%">X:0.000 Y:-24.606 Z:1.701 [m]</div>
<svg class="a" style="left:280px;top:660px" width="520" height="31" viewBox="280 660 520 31">
<defs>
<linearGradient id="sact" x1="0" y1="0" x2="0" y2="1"><stop offset="0" stop-color="#fce0b8"/><stop offset="0.5" stop-color="#fbc070"/><stop offset="1" stop-color="#f8b050"/></linearGradient>
<radialGradient id="zc" cx="0.45" cy="0.4" r="0.6"><stop offset="0" stop-color="#ffffff"/><stop offset="1" stop-color="#b8c8e0"/></radialGradient>
</defs>
<g stroke="#e39a3c" stroke-width="1" fill="url(#sact)">
<rect x="303.5" y="668.5" width="15" height="15" rx="1"/>
<rect x="451.5" y="668.5" width="15" height="15" rx="1"/>
<rect x="501.5" y="668.5" width="15.5" height="15" rx="1"/><rect x="519" y="668.5" width="15.5" height="15" rx="1"/><rect x="536.5" y="668.5" width="15.5" height="15" rx="1"/><rect x="554" y="668.5" width="15.5" height="15" rx="1"/><rect x="571.5" y="668.5" width="15.5" height="15" rx="1"/>
<rect x="604" y="668.5" width="15.5" height="15" rx="1"/><rect x="621.5" y="668.5" width="15.5" height="15" rx="1"/><rect x="639" y="668.5" width="15.5" height="15" rx="1"/><rect x="657" y="668.5" width="15.5" height="15" rx="1"/><rect x="674.5" y="668.5" width="15.5" height="15" rx="1"/>
<rect x="724.5" y="668.5" width="16" height="15" rx="1"/>
<rect x="757.5" y="668.5" width="16" height="15" rx="1"/>
</g>
<g fill="#fff8e0" stroke="#b08040" stroke-width="0.6"><rect x="306" y="671" width="4.5" height="4.5"/><rect x="311.5" y="671" width="4.5" height="4.5"/><rect x="306" y="676.5" width="4.5" height="4.5"/><rect x="311.5" y="676.5" width="4.5" height="4.5"/></g><circle cx="315" cy="672" r="1.8" fill="#f0e000"/>
<circle cx="327.5" cy="676" r="6.2" fill="url(#zc)" stroke="#5a80b8" stroke-width="1"/><path d="M324 676h7" stroke="#2a4a80" stroke-width="1.6"/>
<path d="M338 675.5h78" stroke="#a8acb4" stroke-width="1"/><path d="M338 676.5h78" stroke="#f0f0f4" stroke-width="1"/>
<path d="M412 671h8v6l-4 3-4-3z" fill="#e8eef8" stroke="#5a7ab0" stroke-width="0.8"/>
<circle cx="428.5" cy="676" r="6.2" fill="url(#zc)" stroke="#5a80b8" stroke-width="1"/><path d="M425 676h7M428.5 672.5v7" stroke="#2a4a80" stroke-width="1.6"/>
<path d="M457 681v-9" stroke="#404040" stroke-width="1.5"/><path d="M455 673l2-3 2 3z" fill="#404040"/><circle cx="461" cy="679" r="2.5" fill="#f0d000"/>
<g stroke="#606060" stroke-width="0.6" fill="none"><path d="M471 671h9v9h-9zM474 671v9M477 671v9M471 674h9M471 677h9"/></g><circle cx="481" cy="680" r="2.5" fill="#f0c000"/>
<circle cx="506" cy="674" r="1.3" fill="#111"/><circle cx="512" cy="680" r="2.3" fill="#f0d000"/>
<path d="M521 682l11-11" stroke="#222" stroke-width="1"/><circle cx="530" cy="680" r="2.3" fill="#f0d000"/>
<path d="M538 682l11-11" stroke="#2050c0" stroke-width="1"/><circle cx="540" cy="680" r="1.3" fill="#1a40a0"/><circle cx="549" cy="672" r="1.3" fill="#1a40a0"/><circle cx="548" cy="680" r="2.3" fill="#f0d000"/>
<path d="M556 677l6-6 5 5-6 6z" fill="#40c8d8"/><circle cx="565" cy="680" r="2.3" fill="#f0d000"/>
<path d="M574 676l5-5 6 3-2 7-6 1z" fill="#20a020" stroke="#107010" stroke-width="0.5"/><circle cx="583" cy="680" r="2.3" fill="#f0d000"/>
<path d="M606 682l11-11" stroke="#222" stroke-width="1"/><path d="M611 671l6 5h-3l1.5 3-1 .5-1.5-3-2 2z" fill="#e8eef8" stroke="#4a5a78" stroke-width="0.5"/>
<path d="M623 682l11-11" stroke="#2050c0" stroke-width="1"/><path d="M628 671l6 5h-3l1.5 3-1 .5-1.5-3-2 2z" fill="#e8eef8" stroke="#4a5a78" stroke-width="0.5"/>
<path d="M641 677l6-6 5 5-6 6z" fill="#40c8d8"/><path d="M646 671l6 5h-3l1.5 3-1 .5-1.5-3-2 2z" fill="#e8eef8" stroke="#4a5a78" stroke-width="0.5"/>
<path d="M659 676l5-5 6 3-2 7-6 1z" fill="#20a020"/><path d="M664 671l6 5h-3l1.5 3-1 .5-1.5-3-2 2z" fill="#e8eef8" stroke="#4a5a78" stroke-width="0.5"/>
<rect x="677" y="670.5" width="11" height="11" fill="none" stroke="#222" stroke-width="0.8" stroke-dasharray="1.5 1"/><path d="M681 671l6 5h-3l1.5 3-1 .5-1.5-3-2 2z" fill="#e8eef8" stroke="#4a5a78" stroke-width="0.5"/>
<rect x="708" y="669" width="15" height="14" fill="#111"/><path d="M711 683v-9h9v9M711 676h9M714 674v2M717 674v2" stroke="#f0f0f0" stroke-width="1" fill="none"/>
<path d="M727 683v-10h10v10M727 676h10M730 673v3M733 673v3" stroke="#404040" stroke-width="1" fill="#fff"/>
<rect x="760" y="671" width="10" height="4" fill="#606870"/><rect x="760" y="677" width="10" height="4" fill="#606870"/><rect x="760" y="675" width="10" height="2" fill="#f0f0f0"/>
<rect x="778" y="671" width="10" height="4" fill="#e0e4e8"/><rect x="778" y="677" width="10" height="4" fill="#e0e4e8"/><rect x="778" y="675" width="10" height="1.5" fill="#8090a0"/>
<rect x="796" y="671" width="9" height="9" fill="#5ab0e0"/><path d="M796 674h9M796 677h9" stroke="#e0f0ff" stroke-width="0.8"/>
</svg>

</body></html>
